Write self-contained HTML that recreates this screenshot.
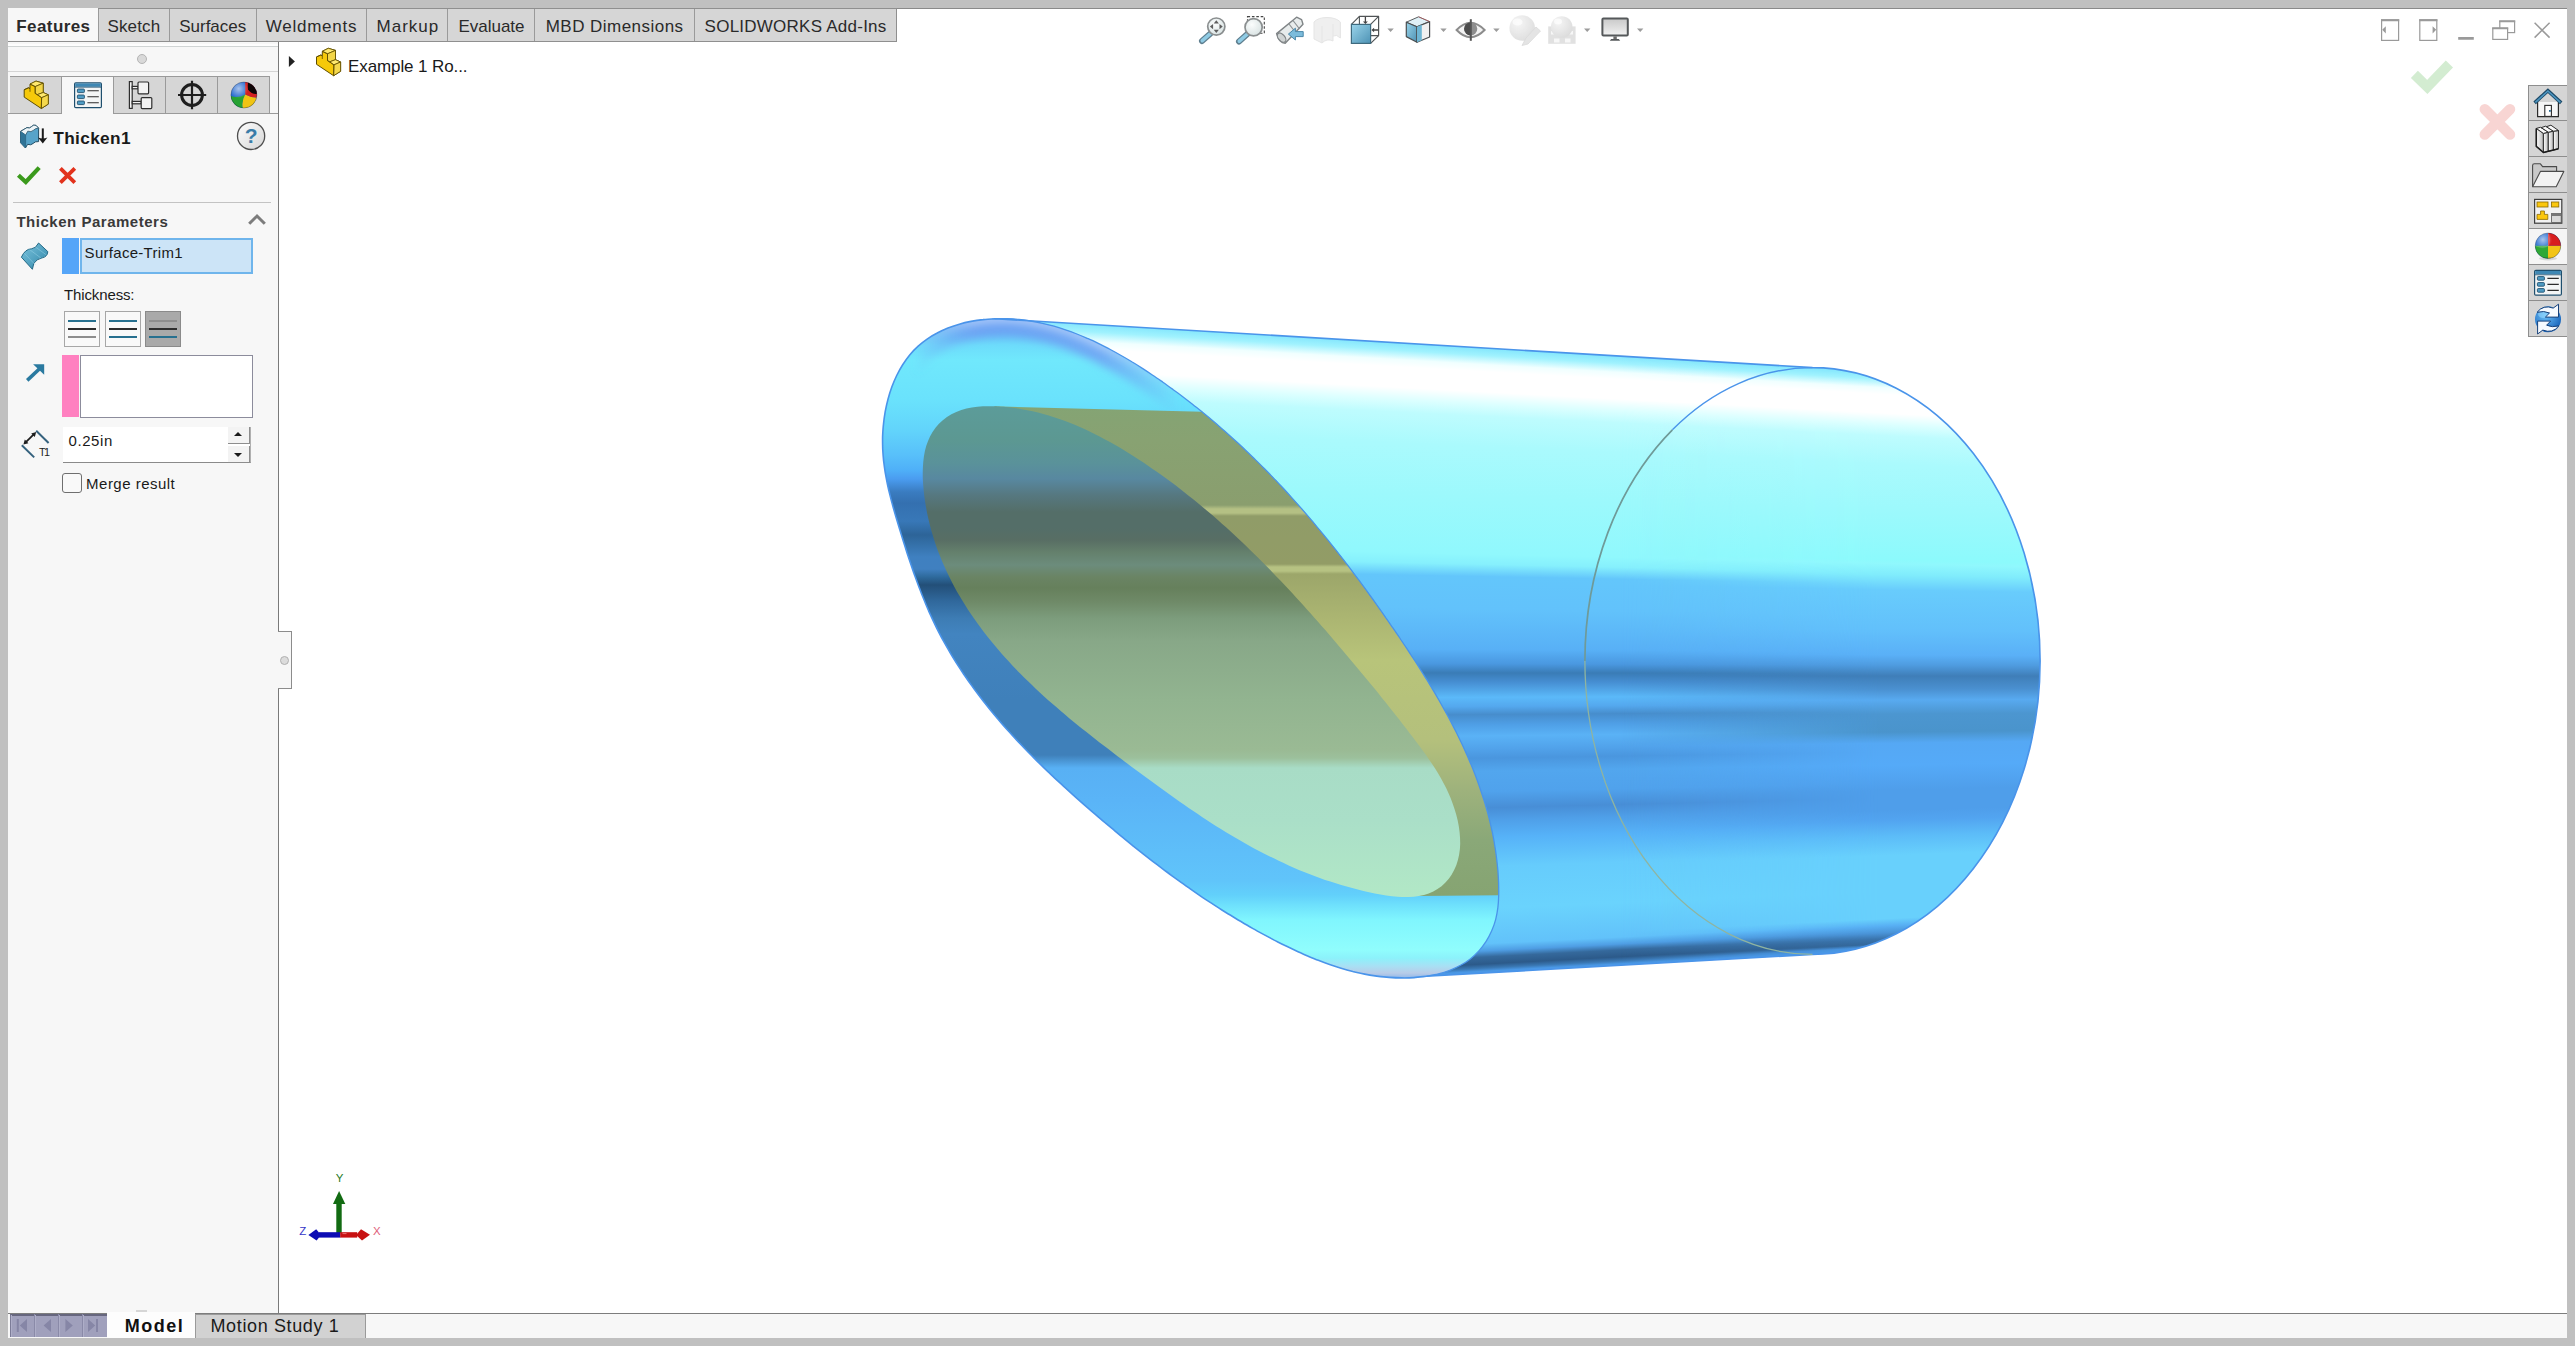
<!DOCTYPE html>
<html lang="en">
<head>
<meta charset="utf-8">
<title>Thicken1 - Example 1 Ro...</title>
<style>
*{box-sizing:border-box;margin:0;padding:0}
html,body{width:2575px;height:1346px;overflow:hidden;background:#c0c0c0;font-family:"Liberation Sans",sans-serif;color:#1b1b1b}
.abs{position:absolute}
.t{position:absolute;white-space:pre;line-height:1;color:#1e1e1e}
#vp{position:absolute;left:279px;top:8px;width:2288px;height:1305px;background:#fff}
#lp{position:absolute;left:8px;top:42px;width:270px;height:1271px;background:#f7f7f7}
#lpb{position:absolute;left:278px;top:42px;width:1px;height:1271px;background:#7a7a7a}
#tabs{position:absolute;left:8px;top:8px;height:34px;width:889px;background:#d6d6d6;border-top:1px solid #8f8f8f;border-bottom:1px solid #8f8f8f;border-right:1px solid #8f8f8f}
#tabs .sep{position:absolute;top:0;width:1px;height:32px;background:#9a9a9a}
#tabs .act{position:absolute;left:0;top:-1px;width:90px;height:33px;background:#f7f7f7}
#bot{position:absolute;left:8px;top:1313px;width:2559px;height:25px;background:#f7f7f7;border-top:1px solid #7d7d7d}
</style>
</head>
<body>
<div id="vp"></div>
<div id="lp"></div>
<div class="abs" style="left:8px;top:8px;width:2559px;height:1px;background:#8a8a8a"></div>
<div id="lpb"></div>
<div id="tabs">
 <div class="act"></div>
 <div class="sep" style="left:90px"></div>
 <div class="sep" style="left:161px"></div>
 <div class="sep" style="left:248px"></div>
 <div class="sep" style="left:358px"></div>
 <div class="sep" style="left:439px"></div>
 <div class="sep" style="left:526px"></div>
 <div class="sep" style="left:686px"></div>
</div>
<!-- panel top strip -->
<div class="abs" style="left:8px;top:44px;width:270px;height:2px;background:#fdfdfd"></div>
<div class="abs" style="left:8px;top:46px;width:270px;height:1px;background:#d0d4d4"></div>
<div class="abs" style="left:8px;top:71px;width:270px;height:1px;background:#d4d4d4"></div>
<div class="abs" style="left:137px;top:54px;width:10px;height:10px;border-radius:50%;background:#d9d9d9;border:1px solid #b4b4b4"></div>
<!-- icon tabs -->
<div class="abs" style="left:10px;top:76px;width:260px;height:38px;background:#d6d6d6;border-top:1px solid #9a9a9a;border-right:1px solid #9a9a9a"></div>
<div class="abs" style="left:8px;top:113px;width:270px;height:1px;background:#9a9a9a"></div>
<div class="abs" style="left:62px;top:77px;width:51px;height:37px;background:#f7f7f7"></div>
<div class="abs" style="left:61px;top:77px;width:1px;height:36px;background:#9a9a9a"></div>
<div class="abs" style="left:113px;top:77px;width:1px;height:37px;background:#9a9a9a"></div>
<div class="abs" style="left:165px;top:77px;width:1px;height:36px;background:#9a9a9a"></div>
<div class="abs" style="left:217px;top:77px;width:1px;height:36px;background:#9a9a9a"></div>
<!-- separator under ok/cancel -->
<div class="abs" style="left:13px;top:202px;width:258px;height:1px;background:#c3c3c3"></div>
<!-- selection box 1 -->
<div class="abs" style="left:62px;top:238px;width:17px;height:36px;background:#55a5f8"></div>
<div class="abs" style="left:80px;top:238px;width:173px;height:36px;background:#cce4f7;border:2px solid #6fb5ec"></div>
<!-- thickness buttons -->
<div class="abs" style="left:64px;top:311px;width:36px;height:36px;background:#f9f9f9;border:1px solid #a7a7a7"></div>
<div class="abs" style="left:105px;top:311px;width:36px;height:36px;background:#f9f9f9;border:1px solid #a7a7a7"></div>
<div class="abs" style="left:145px;top:311px;width:36px;height:36px;background:#a9a9a9;border:1px solid #8a8a8a"></div>
<!-- lines in buttons -->
<div class="abs" style="left:68px;top:320px;width:28px;height:2px;background:#27708f"></div>
<div class="abs" style="left:68px;top:328px;width:28px;height:2px;background:#2d2d2d"></div>
<div class="abs" style="left:68px;top:336px;width:28px;height:2px;background:#8d8d8d"></div>
<div class="abs" style="left:109px;top:320px;width:28px;height:2px;background:#27708f"></div>
<div class="abs" style="left:109px;top:328px;width:28px;height:2px;background:#2d2d2d"></div>
<div class="abs" style="left:109px;top:336px;width:28px;height:2px;background:#27708f"></div>
<div class="abs" style="left:149px;top:320px;width:28px;height:2px;background:#8d8d8d"></div>
<div class="abs" style="left:149px;top:328px;width:28px;height:2px;background:#2d2d2d"></div>
<div class="abs" style="left:149px;top:336px;width:28px;height:2px;background:#27708f"></div>
<!-- selection box 2 -->
<div class="abs" style="left:62px;top:355px;width:17px;height:62px;background:#ff80c0"></div>
<div class="abs" style="left:80px;top:355px;width:173px;height:63px;background:#fff;border:1px solid #8c8c9c"></div>
<!-- spin box -->
<div class="abs" style="left:63px;top:427px;width:188px;height:36px;background:#fff;border-bottom:1px solid #8a8a8a;border-right:1px solid #b0b0b0"></div>
<div class="abs" style="left:228px;top:427px;width:22px;height:17px;background:#f3f3f3;border-right:1px solid #8d8d8d;border-bottom:1px solid #8d8d8d"></div>
<div class="abs" style="left:228px;top:446px;width:22px;height:17px;background:#f3f3f3;border-right:1px solid #8d8d8d;border-bottom:1px solid #8d8d8d"></div>
<div class="abs" style="left:234px;top:432px;width:0;height:0;border-left:4px solid transparent;border-right:4px solid transparent;border-bottom:4px solid #1a1a1a"></div>
<div class="abs" style="left:234px;top:453px;width:0;height:0;border-left:4px solid transparent;border-right:4px solid transparent;border-top:4px solid #1a1a1a"></div>
<!-- checkbox -->
<div class="abs" style="left:62px;top:473px;width:20px;height:20px;background:#f9f9f9;border:1px solid #6f6f6f;border-radius:3px"></div>
<!-- splitter handle -->
<div class="abs" style="left:278px;top:631px;width:14px;height:58px;background:#f7f7f7;border:1px solid #8c8c8c;border-left:none"></div>
<div class="abs" style="left:280px;top:656px;width:9px;height:9px;border-radius:50%;background:#dcdcdc;border:1px solid #b0b0b0"></div>
<!-- grip --><div class="abs" style="left:136px;top:1310px;width:11px;height:2px;background:#d6d6d6"></div>
<!-- bottom bar -->
<div id="bot"></div>
<div class="abs" style="left:10px;top:1314px;width:97px;height:23px;background:#a0a0bc;border-top:2px solid #66667e;border-left:1px solid #7c7c98"></div>
<div class="abs" style="left:107px;top:1312px;width:88px;height:26px;background:#fdfdfd"></div>
<div class="abs" style="left:195px;top:1314px;width:171px;height:24px;background:#d2d2d2;border:1px solid #9a9a9a;border-bottom:none"></div>
<div class="abs" style="left:0;top:0;width:2575px;height:1346px;clip-path:path('M995.0 318.7 L1812.5 367.6 A227.6 293.4 0 0 1 1812.5 954.4 L1426.4 976.3 C1424.3 976.5 1418.2 977.3 1414.0 977.6 C1409.9 977.9 1405.7 978.0 1401.5 977.9 C1397.3 977.9 1393.2 977.7 1389.0 977.4 C1384.9 977.1 1380.8 976.6 1376.8 976.1 C1372.7 975.5 1368.7 974.9 1364.7 974.1 C1360.7 973.3 1356.8 972.4 1352.8 971.5 C1348.9 970.5 1345.0 969.4 1341.1 968.2 C1337.3 967.1 1333.4 965.8 1329.6 964.5 C1325.8 963.2 1322.0 961.8 1318.3 960.3 C1314.5 958.9 1310.8 957.3 1307.0 955.7 C1303.3 954.1 1299.6 952.5 1296.0 950.8 C1292.3 949.1 1288.7 947.3 1285.0 945.5 C1281.4 943.8 1277.8 941.9 1274.2 940.1 C1270.7 938.2 1267.1 936.3 1263.5 934.4 C1260.0 932.5 1256.5 930.6 1253.0 928.6 C1249.5 926.6 1246.0 924.6 1242.5 922.5 C1239.0 920.5 1235.6 918.4 1232.2 916.3 C1228.7 914.2 1225.3 912.1 1221.9 910.0 C1218.5 907.8 1215.1 905.6 1211.8 903.4 C1208.4 901.2 1205.0 899.0 1201.7 896.8 C1198.4 894.5 1195.0 892.2 1191.7 889.9 C1188.4 887.6 1185.1 885.3 1181.8 882.9 C1178.6 880.6 1175.3 878.2 1172.0 875.8 C1168.8 873.5 1165.6 871.0 1162.3 868.6 C1159.1 866.2 1155.9 863.7 1152.7 861.3 C1149.5 858.8 1146.3 856.3 1143.1 853.8 C1139.9 851.3 1136.8 848.8 1133.6 846.3 C1130.4 843.7 1127.3 841.2 1124.2 838.6 C1121.0 836.0 1117.9 833.4 1114.8 830.8 C1111.7 828.3 1108.5 825.6 1105.4 823.0 C1102.3 820.4 1099.2 817.8 1096.2 815.1 C1093.1 812.5 1090.0 809.8 1086.9 807.1 C1083.9 804.5 1080.8 801.8 1077.8 799.1 C1074.7 796.4 1071.7 793.7 1068.7 790.9 C1065.7 788.2 1062.7 785.5 1059.7 782.7 C1056.7 780.0 1053.7 777.2 1050.8 774.4 C1047.9 771.6 1044.9 768.8 1042.0 765.9 C1039.1 763.1 1036.2 760.3 1033.4 757.4 C1030.5 754.5 1027.7 751.6 1024.9 748.7 C1022.1 745.8 1019.3 742.9 1016.5 739.9 C1013.8 737.0 1011.1 734.0 1008.4 731.0 C1005.7 728.0 1003.0 725.0 1000.4 721.9 C997.8 718.9 995.2 715.8 992.6 712.7 C990.0 709.6 987.5 706.5 985.0 703.3 C982.5 700.2 980.1 697.0 977.7 693.8 C975.3 690.6 972.9 687.4 970.6 684.1 C968.2 680.8 966.0 677.5 963.7 674.2 C961.5 670.9 959.3 667.5 957.1 664.1 C955.0 660.8 952.9 657.3 950.8 653.9 C948.8 650.4 946.8 646.9 944.8 643.4 C942.8 639.9 940.9 636.4 939.1 632.8 C937.2 629.2 935.4 625.6 933.7 621.9 C932.0 618.2 930.3 614.5 928.6 610.8 C927.0 607.1 925.4 603.3 923.9 599.5 C922.3 595.8 920.8 592.0 919.4 588.1 C917.9 584.3 916.5 580.5 915.1 576.6 C913.7 572.8 912.4 568.9 911.1 565.0 C909.8 561.1 908.5 557.3 907.2 553.4 C906.0 549.5 904.7 545.6 903.5 541.7 C902.3 537.9 901.1 534.0 899.9 530.1 C898.7 526.3 897.6 522.4 896.4 518.6 C895.3 514.7 894.2 510.9 893.1 507.1 C892.1 503.2 891.0 499.4 890.1 495.6 C889.1 491.7 888.2 487.9 887.4 484.0 C886.6 480.2 885.9 476.3 885.2 472.4 C884.6 468.5 884.1 464.6 883.6 460.6 C883.2 456.7 882.9 452.7 882.7 448.7 C882.6 444.7 882.5 440.7 882.6 436.6 C882.8 432.5 883.0 428.3 883.5 424.2 C883.9 420.0 884.5 415.8 885.2 411.7 C886.0 407.5 886.9 403.3 888.0 399.2 C889.1 395.1 890.4 391.0 891.8 387.1 C893.3 383.1 894.9 379.2 896.7 375.5 C898.5 371.8 900.5 368.1 902.7 364.7 C904.8 361.3 907.2 358.0 909.7 354.9 C912.3 351.9 915.0 349.0 917.9 346.4 C920.8 343.7 923.9 341.3 927.1 339.1 C930.3 336.8 933.7 334.8 937.2 333.0 C940.6 331.1 944.3 329.5 947.9 328.0 C951.6 326.6 955.4 325.3 959.3 324.2 C963.1 323.1 967.0 322.2 971.0 321.4 C974.9 320.6 979.0 320.0 983.0 319.6 C987.0 319.1 993.0 318.8 995.0 318.7 Z');background:conic-gradient(from 0deg at 6880px 678px, #4a98e6 266.8583deg, #4a98e6 266.8906deg, #3a78b4 266.9228deg, #2c5a8a 266.9657deg, #35699c 267.0409deg, #4f9ee4 267.1054deg, #62c2fa 267.1806deg, #6ad3fd 267.5567deg, #66ccfc 267.9976deg, #56b2f8 268.3096deg, #4f9fe8 268.4926deg, #488ed6 268.6217deg, #50a2ec 268.7940deg, #52a6ee 269.0093deg, #4a96de 269.1492deg, #51a2ea 269.2462deg, #5ab2f6 269.3861deg, #4f9fe6 269.5046deg, #478dcc 269.6123deg, #54a8ee 269.6984deg, #5bb9f9 269.7954deg, #468ed2 269.9569deg, #3a7cb6 270.0538deg, #4a98e0 270.1508deg, #58b0f6 270.3016deg, #62c2fb 270.7323deg, #63c6fb 271.0769deg, #86f0fd 271.2060deg, #90f8fd 271.3137deg, #9cf9fc 271.9163deg, #aafafd 272.4540deg, #befcfe 272.7765deg, #dcffff 272.9054deg, #ffffff 273.0343deg, #ffffff 273.2490deg, #f0ffff 273.3242deg, #a0f2fe 273.4208deg, #7fe4fc 273.5120deg, #4f9ff0 273.5388deg)"></div>
<div class="abs" style="left:0;top:0;width:2575px;height:1346px;clip-path:path('M995.0 318.7 L1812.5 367.6 A227.6 293.4 0 0 1 1812.5 954.4 L1426.4 976.3 C1424.3 976.5 1418.2 977.3 1414.0 977.6 C1409.9 977.9 1405.7 978.0 1401.5 977.9 C1397.3 977.9 1393.2 977.7 1389.0 977.4 C1384.9 977.1 1380.8 976.6 1376.8 976.1 C1372.7 975.5 1368.7 974.9 1364.7 974.1 C1360.7 973.3 1356.8 972.4 1352.8 971.5 C1348.9 970.5 1345.0 969.4 1341.1 968.2 C1337.3 967.1 1333.4 965.8 1329.6 964.5 C1325.8 963.2 1322.0 961.8 1318.3 960.3 C1314.5 958.9 1310.8 957.3 1307.0 955.7 C1303.3 954.1 1299.6 952.5 1296.0 950.8 C1292.3 949.1 1288.7 947.3 1285.0 945.5 C1281.4 943.8 1277.8 941.9 1274.2 940.1 C1270.7 938.2 1267.1 936.3 1263.5 934.4 C1260.0 932.5 1256.5 930.6 1253.0 928.6 C1249.5 926.6 1246.0 924.6 1242.5 922.5 C1239.0 920.5 1235.6 918.4 1232.2 916.3 C1228.7 914.2 1225.3 912.1 1221.9 910.0 C1218.5 907.8 1215.1 905.6 1211.8 903.4 C1208.4 901.2 1205.0 899.0 1201.7 896.8 C1198.4 894.5 1195.0 892.2 1191.7 889.9 C1188.4 887.6 1185.1 885.3 1181.8 882.9 C1178.6 880.6 1175.3 878.2 1172.0 875.8 C1168.8 873.5 1165.6 871.0 1162.3 868.6 C1159.1 866.2 1155.9 863.7 1152.7 861.3 C1149.5 858.8 1146.3 856.3 1143.1 853.8 C1139.9 851.3 1136.8 848.8 1133.6 846.3 C1130.4 843.7 1127.3 841.2 1124.2 838.6 C1121.0 836.0 1117.9 833.4 1114.8 830.8 C1111.7 828.3 1108.5 825.6 1105.4 823.0 C1102.3 820.4 1099.2 817.8 1096.2 815.1 C1093.1 812.5 1090.0 809.8 1086.9 807.1 C1083.9 804.5 1080.8 801.8 1077.8 799.1 C1074.7 796.4 1071.7 793.7 1068.7 790.9 C1065.7 788.2 1062.7 785.5 1059.7 782.7 C1056.7 780.0 1053.7 777.2 1050.8 774.4 C1047.9 771.6 1044.9 768.8 1042.0 765.9 C1039.1 763.1 1036.2 760.3 1033.4 757.4 C1030.5 754.5 1027.7 751.6 1024.9 748.7 C1022.1 745.8 1019.3 742.9 1016.5 739.9 C1013.8 737.0 1011.1 734.0 1008.4 731.0 C1005.7 728.0 1003.0 725.0 1000.4 721.9 C997.8 718.9 995.2 715.8 992.6 712.7 C990.0 709.6 987.5 706.5 985.0 703.3 C982.5 700.2 980.1 697.0 977.7 693.8 C975.3 690.6 972.9 687.4 970.6 684.1 C968.2 680.8 966.0 677.5 963.7 674.2 C961.5 670.9 959.3 667.5 957.1 664.1 C955.0 660.8 952.9 657.3 950.8 653.9 C948.8 650.4 946.8 646.9 944.8 643.4 C942.8 639.9 940.9 636.4 939.1 632.8 C937.2 629.2 935.4 625.6 933.7 621.9 C932.0 618.2 930.3 614.5 928.6 610.8 C927.0 607.1 925.4 603.3 923.9 599.5 C922.3 595.8 920.8 592.0 919.4 588.1 C917.9 584.3 916.5 580.5 915.1 576.6 C913.7 572.8 912.4 568.9 911.1 565.0 C909.8 561.1 908.5 557.3 907.2 553.4 C906.0 549.5 904.7 545.6 903.5 541.7 C902.3 537.9 901.1 534.0 899.9 530.1 C898.7 526.3 897.6 522.4 896.4 518.6 C895.3 514.7 894.2 510.9 893.1 507.1 C892.1 503.2 891.0 499.4 890.1 495.6 C889.1 491.7 888.2 487.9 887.4 484.0 C886.6 480.2 885.9 476.3 885.2 472.4 C884.6 468.5 884.1 464.6 883.6 460.6 C883.2 456.7 882.9 452.7 882.7 448.7 C882.6 444.7 882.5 440.7 882.6 436.6 C882.8 432.5 883.0 428.3 883.5 424.2 C883.9 420.0 884.5 415.8 885.2 411.7 C886.0 407.5 886.9 403.3 888.0 399.2 C889.1 395.1 890.4 391.0 891.8 387.1 C893.3 383.1 894.9 379.2 896.7 375.5 C898.5 371.8 900.5 368.1 902.7 364.7 C904.8 361.3 907.2 358.0 909.7 354.9 C912.3 351.9 915.0 349.0 917.9 346.4 C920.8 343.7 923.9 341.3 927.1 339.1 C930.3 336.8 933.7 334.8 937.2 333.0 C940.6 331.1 944.3 329.5 947.9 328.0 C951.6 326.6 955.4 325.3 959.3 324.2 C963.1 323.1 967.0 322.2 971.0 321.4 C974.9 320.6 979.0 320.0 983.0 319.6 C987.0 319.1 993.0 318.8 995.0 318.7 Z');background:conic-gradient(from 0deg at 6880px 678px, #4a98e6 266.8737deg, #4a98e6 266.9196deg, #35699c 266.9540deg, #3a74ac 267.0114deg, #4a94d8 267.0802deg, #58b0f4 267.1605deg, #68d0fc 267.2409deg, #68d0fc 267.9644deg, #5cbcf8 268.1828deg, #52a4f0 268.3667deg, #4f9eea 268.4817deg, #4f9eea 268.7116deg, #55aaf8 268.9992deg, #55a8f4 269.2522deg, #4a94cc 269.3787deg, #4c96d0 269.5858deg, #58aaf0 269.7469deg, #4a90d0 269.8734deg, #3f7eb8 270.0230deg, #4f9ce0 270.1496deg, #5ab0f7 270.2646deg, #62c0fb 270.5522deg, #68ccfc 271.0124deg, #80ecfc 271.1849deg, #90f8fd 271.3137deg, #8cfafc 271.3574deg, #9cf9fc 271.9163deg, #aafafd 272.4540deg, #befcfe 272.7765deg, #dcffff 272.9054deg, #ffffff 273.0343deg, #ffffff 273.2490deg, #f0ffff 273.3242deg, #a0f2fe 273.4208deg, #7fe4fc 273.5120deg, #4f9ff0 273.5388deg);-webkit-mask-image:linear-gradient(to right,transparent 1620px,#000 1880px);mask-image:linear-gradient(to right,transparent 1620px,#000 1880px)"></div>
<svg class="abs" style="left:0;top:0" width="2575" height="1346" viewBox="0 0 2575 1346"><defs><linearGradient id="gR" gradientUnits="userSpaceOnUse" x1="0" y1="317" x2="0" y2="979"><stop offset="0.0000" stop-color="#5aa6f2"/><stop offset="0.0423" stop-color="#6ddcfb"/><stop offset="0.0650" stop-color="#70e8fc"/><stop offset="0.1254" stop-color="#6ae2fc"/><stop offset="0.1707" stop-color="#62d4fb"/><stop offset="0.2085" stop-color="#58c0fa"/><stop offset="0.2311" stop-color="#4fb0f8"/><stop offset="0.2447" stop-color="#4a9cf0"/><stop offset="0.2644" stop-color="#3a7cc0"/><stop offset="0.2810" stop-color="#3470b0"/><stop offset="0.3082" stop-color="#3878b8"/><stop offset="0.3293" stop-color="#2d6498"/><stop offset="0.3429" stop-color="#3470a8"/><stop offset="0.3625" stop-color="#3f80c0"/><stop offset="0.3807" stop-color="#4080c0"/><stop offset="0.3927" stop-color="#2e6a9c"/><stop offset="0.4048" stop-color="#234f78"/><stop offset="0.4290" stop-color="#30689c"/><stop offset="0.4547" stop-color="#3d7cb4"/><stop offset="0.4789" stop-color="#4284c0"/><stop offset="0.5785" stop-color="#3f80ba"/><stop offset="0.6616" stop-color="#3f80ba"/><stop offset="0.6813" stop-color="#58b0f4"/><stop offset="0.7296" stop-color="#5ab4f7"/><stop offset="0.8505" stop-color="#60c4fa"/><stop offset="0.8731" stop-color="#62d0fb"/><stop offset="0.8882" stop-color="#6ee0fc"/><stop offset="0.9109" stop-color="#80f6fe"/><stop offset="0.9562" stop-color="#90fdfd"/><stop offset="0.9683" stop-color="#8cf2fb"/><stop offset="0.9804" stop-color="#a8e0f4"/><stop offset="0.9909" stop-color="#b8cce8"/><stop offset="0.9970" stop-color="#9abce8"/><stop offset="1.0000" stop-color="#4f9ff0"/></linearGradient><linearGradient id="gI" gradientUnits="userSpaceOnUse" x1="0" y1="404" x2="0" y2="897"><stop offset="0.0000" stop-color="#5c9c9a"/><stop offset="0.0730" stop-color="#5c9892"/><stop offset="0.1197" stop-color="#5a929a"/><stop offset="0.1521" stop-color="#5888a0"/><stop offset="0.1846" stop-color="#567880"/><stop offset="0.2191" stop-color="#546e68"/><stop offset="0.2515" stop-color="#546e68"/><stop offset="0.2759" stop-color="#586e64"/><stop offset="0.3002" stop-color="#64806c"/><stop offset="0.3266" stop-color="#6c8c7c"/><stop offset="0.3509" stop-color="#6a8464"/><stop offset="0.3732" stop-color="#66805c"/><stop offset="0.4016" stop-color="#6f8a68"/><stop offset="0.4341" stop-color="#7c9c7c"/><stop offset="0.4828" stop-color="#88a888"/><stop offset="0.6004" stop-color="#92b490"/><stop offset="0.7018" stop-color="#9aba94"/><stop offset="0.7181" stop-color="#9cc09c"/><stop offset="0.7383" stop-color="#a8dcc6"/><stop offset="0.8438" stop-color="#aadfc8"/><stop offset="1.0000" stop-color="#b2e8c6"/></linearGradient><linearGradient id="gO" gradientUnits="userSpaceOnUse" x1="0" y1="404" x2="0" y2="895"><stop offset="0.0000" stop-color="#84a474"/><stop offset="0.0733" stop-color="#88a272"/><stop offset="0.2057" stop-color="#8a9e6e"/><stop offset="0.2138" stop-color="#b4c084"/><stop offset="0.2220" stop-color="#b4c084"/><stop offset="0.2281" stop-color="#909c68"/><stop offset="0.3259" stop-color="#929c66"/><stop offset="0.3320" stop-color="#b6c282"/><stop offset="0.3401" stop-color="#b6c282"/><stop offset="0.3462" stop-color="#9ca66a"/><stop offset="0.4399" stop-color="#acb672"/><stop offset="0.5214" stop-color="#b8c47a"/><stop offset="0.6843" stop-color="#b4c07c"/><stop offset="0.7862" stop-color="#9eb27c"/><stop offset="0.8880" stop-color="#8aa878"/><stop offset="1.0000" stop-color="#86a472"/></linearGradient></defs><path d="M995.0 318.7 C993.0 318.8 987.0 319.1 983.0 319.6 C979.0 320.0 974.9 320.6 971.0 321.4 C967.0 322.2 963.1 323.1 959.3 324.2 C955.4 325.3 951.6 326.6 947.9 328.0 C944.3 329.5 940.6 331.1 937.2 333.0 C933.7 334.8 930.3 336.8 927.1 339.1 C923.9 341.3 920.8 343.7 917.9 346.4 C915.0 349.0 912.3 351.9 909.7 354.9 C907.2 358.0 904.8 361.3 902.7 364.7 C900.5 368.1 898.5 371.8 896.7 375.5 C894.9 379.2 893.3 383.1 891.8 387.1 C890.4 391.0 889.1 395.1 888.0 399.2 C886.9 403.3 886.0 407.5 885.2 411.7 C884.5 415.8 883.9 420.0 883.5 424.2 C883.0 428.3 882.8 432.5 882.6 436.6 C882.5 440.7 882.6 444.7 882.7 448.7 C882.9 452.7 883.2 456.7 883.6 460.6 C884.1 464.6 884.6 468.5 885.2 472.4 C885.9 476.3 886.6 480.2 887.4 484.0 C888.2 487.9 889.1 491.7 890.1 495.6 C891.0 499.4 892.1 503.2 893.1 507.1 C894.2 510.9 895.3 514.7 896.4 518.6 C897.6 522.4 898.7 526.3 899.9 530.1 C901.1 534.0 902.3 537.9 903.5 541.7 C904.7 545.6 906.0 549.5 907.2 553.4 C908.5 557.3 909.8 561.1 911.1 565.0 C912.4 568.9 913.7 572.8 915.1 576.6 C916.5 580.5 917.9 584.3 919.4 588.1 C920.8 592.0 922.3 595.8 923.9 599.5 C925.4 603.3 927.0 607.1 928.6 610.8 C930.3 614.5 932.0 618.2 933.7 621.9 C935.4 625.6 937.2 629.2 939.1 632.8 C940.9 636.4 942.8 639.9 944.8 643.4 C946.8 646.9 948.8 650.4 950.8 653.9 C952.9 657.3 955.0 660.8 957.1 664.1 C959.3 667.5 961.5 670.9 963.7 674.2 C966.0 677.5 968.2 680.8 970.6 684.1 C972.9 687.4 975.3 690.6 977.7 693.8 C980.1 697.0 982.5 700.2 985.0 703.3 C987.5 706.5 990.0 709.6 992.6 712.7 C995.2 715.8 997.8 718.9 1000.4 721.9 C1003.0 725.0 1005.7 728.0 1008.4 731.0 C1011.1 734.0 1013.8 737.0 1016.5 739.9 C1019.3 742.9 1022.1 745.8 1024.9 748.7 C1027.7 751.6 1030.5 754.5 1033.4 757.4 C1036.2 760.3 1039.1 763.1 1042.0 765.9 C1044.9 768.8 1047.9 771.6 1050.8 774.4 C1053.7 777.2 1056.7 780.0 1059.7 782.7 C1062.7 785.5 1065.7 788.2 1068.7 790.9 C1071.7 793.7 1074.7 796.4 1077.8 799.1 C1080.8 801.8 1083.9 804.5 1086.9 807.1 C1090.0 809.8 1093.1 812.5 1096.2 815.1 C1099.2 817.8 1102.3 820.4 1105.4 823.0 C1108.5 825.6 1111.7 828.3 1114.8 830.8 C1117.9 833.4 1121.0 836.0 1124.2 838.6 C1127.3 841.2 1130.4 843.7 1133.6 846.3 C1136.8 848.8 1139.9 851.3 1143.1 853.8 C1146.3 856.3 1149.5 858.8 1152.7 861.3 C1155.9 863.7 1159.1 866.2 1162.3 868.6 C1165.6 871.0 1168.8 873.5 1172.0 875.8 C1175.3 878.2 1178.6 880.6 1181.8 882.9 C1185.1 885.3 1188.4 887.6 1191.7 889.9 C1195.0 892.2 1198.4 894.5 1201.7 896.8 C1205.0 899.0 1208.4 901.2 1211.8 903.4 C1215.1 905.6 1218.5 907.8 1221.9 910.0 C1225.3 912.1 1228.7 914.2 1232.2 916.3 C1235.6 918.4 1239.0 920.5 1242.5 922.5 C1246.0 924.6 1249.5 926.6 1253.0 928.6 C1256.5 930.6 1260.0 932.5 1263.5 934.4 C1267.1 936.3 1270.7 938.2 1274.2 940.1 C1277.8 941.9 1281.4 943.8 1285.0 945.5 C1288.7 947.3 1292.3 949.1 1296.0 950.8 C1299.6 952.5 1303.3 954.1 1307.0 955.7 C1310.8 957.3 1314.5 958.9 1318.3 960.3 C1322.0 961.8 1325.8 963.2 1329.6 964.5 C1333.4 965.8 1337.3 967.1 1341.1 968.2 C1345.0 969.4 1348.9 970.5 1352.8 971.5 C1356.8 972.4 1360.7 973.3 1364.7 974.1 C1368.7 974.9 1372.7 975.5 1376.8 976.1 C1380.8 976.6 1384.9 977.1 1389.0 977.4 C1393.2 977.7 1397.3 977.9 1401.5 977.9 C1405.7 978.0 1409.9 977.9 1414.0 977.6 C1418.2 977.3 1422.3 976.9 1426.4 976.3 C1430.4 975.7 1434.5 974.9 1438.4 973.9 C1442.3 972.9 1446.1 971.7 1449.8 970.3 C1453.5 968.9 1457.1 967.2 1460.5 965.3 C1463.9 963.5 1467.2 961.3 1470.3 958.9 C1473.3 956.5 1476.2 953.8 1478.9 950.9 C1481.5 948.0 1483.9 944.8 1486.1 941.4 C1488.2 938.1 1490.1 934.5 1491.7 930.8 C1493.3 927.1 1494.7 923.2 1495.7 919.3 C1496.7 915.4 1497.4 911.4 1497.9 907.4 C1498.4 903.4 1498.6 899.3 1498.7 895.2 C1498.8 891.1 1498.7 886.9 1498.6 882.8 C1498.4 878.7 1498.2 874.6 1497.9 870.6 C1497.5 866.5 1497.1 862.5 1496.6 858.5 C1496.1 854.4 1495.6 850.4 1494.9 846.5 C1494.3 842.5 1493.6 838.5 1492.8 834.6 C1492.0 830.6 1491.1 826.7 1490.2 822.8 C1489.3 818.9 1488.3 815.0 1487.2 811.1 C1486.1 807.3 1485.0 803.4 1483.8 799.6 C1482.6 795.8 1481.3 792.0 1480.0 788.2 C1478.7 784.4 1477.3 780.6 1475.9 776.8 C1474.5 773.1 1473.0 769.3 1471.5 765.6 C1469.9 761.9 1468.4 758.2 1466.7 754.5 C1465.1 750.8 1463.4 747.1 1461.7 743.5 C1459.9 739.8 1458.2 736.2 1456.4 732.5 C1454.5 728.9 1452.7 725.3 1450.8 721.7 C1448.9 718.1 1447.0 714.5 1445.0 711.0 C1443.0 707.4 1441.0 703.8 1439.0 700.3 C1437.0 696.8 1434.9 693.2 1432.8 689.7 C1430.7 686.2 1428.6 682.7 1426.5 679.2 C1424.3 675.7 1422.1 672.3 1420.0 668.8 C1417.8 665.4 1415.6 661.9 1413.3 658.5 C1411.1 655.1 1408.8 651.6 1406.6 648.2 C1404.3 644.8 1402.0 641.4 1399.8 638.0 C1397.5 634.7 1395.2 631.3 1392.9 627.9 C1390.6 624.6 1388.3 621.2 1385.9 617.9 C1383.6 614.5 1381.3 611.2 1378.9 607.9 C1376.6 604.6 1374.2 601.3 1371.9 598.0 C1369.5 594.7 1367.1 591.4 1364.8 588.2 C1362.4 584.9 1360.0 581.6 1357.6 578.4 C1355.2 575.2 1352.7 571.9 1350.3 568.7 C1347.9 565.5 1345.4 562.3 1343.0 559.1 C1340.5 556.0 1338.0 552.8 1335.6 549.6 C1333.1 546.5 1330.6 543.4 1328.0 540.2 C1325.5 537.1 1323.0 534.0 1320.4 530.9 C1317.9 527.8 1315.3 524.8 1312.8 521.7 C1310.2 518.6 1307.6 515.6 1305.0 512.6 C1302.3 509.6 1299.7 506.5 1297.1 503.6 C1294.4 500.6 1291.7 497.6 1289.1 494.6 C1286.4 491.7 1283.7 488.7 1280.9 485.8 C1278.2 482.9 1275.5 480.0 1272.7 477.1 C1269.9 474.2 1267.1 471.4 1264.3 468.5 C1261.5 465.7 1258.7 462.9 1255.8 460.1 C1253.0 457.3 1250.1 454.5 1247.2 451.7 C1244.3 448.9 1241.4 446.2 1238.5 443.5 C1235.5 440.7 1232.5 438.0 1229.6 435.4 C1226.6 432.7 1223.6 430.0 1220.5 427.4 C1217.5 424.7 1214.4 422.1 1211.3 419.5 C1208.2 416.9 1205.1 414.3 1202.0 411.8 C1198.8 409.2 1195.6 406.7 1192.5 404.2 C1189.3 401.7 1186.0 399.2 1182.8 396.7 C1179.5 394.3 1176.2 391.8 1172.9 389.4 C1169.6 387.0 1166.3 384.6 1162.9 382.2 C1159.6 379.9 1156.2 377.5 1152.7 375.2 C1149.3 372.9 1145.8 370.6 1142.4 368.4 C1138.9 366.1 1135.4 363.9 1131.8 361.8 C1128.3 359.6 1124.7 357.5 1121.1 355.5 C1117.5 353.4 1113.9 351.4 1110.3 349.5 C1106.7 347.5 1103.0 345.7 1099.3 343.9 C1095.6 342.1 1091.9 340.3 1088.2 338.7 C1084.4 337.1 1080.7 335.5 1076.9 334.0 C1073.1 332.5 1069.4 331.1 1065.5 329.8 C1061.7 328.5 1057.9 327.3 1054.0 326.2 C1050.2 325.2 1046.3 324.2 1042.4 323.3 C1038.5 322.4 1034.6 321.6 1030.7 321.0 C1026.8 320.4 1022.8 319.8 1018.9 319.4 C1014.9 319.0 1011.0 318.8 1007.0 318.6 C1003.0 318.5 997.0 318.7 995.0 318.7 Z" fill="url(#gR)"/><clipPath id="cpC"><path d="M995.0 318.7 C993.0 318.8 987.0 319.1 983.0 319.6 C979.0 320.0 974.9 320.6 971.0 321.4 C967.0 322.2 963.1 323.1 959.3 324.2 C955.4 325.3 951.6 326.6 947.9 328.0 C944.3 329.5 940.6 331.1 937.2 333.0 C933.7 334.8 930.3 336.8 927.1 339.1 C923.9 341.3 920.8 343.7 917.9 346.4 C915.0 349.0 912.3 351.9 909.7 354.9 C907.2 358.0 904.8 361.3 902.7 364.7 C900.5 368.1 898.5 371.8 896.7 375.5 C894.9 379.2 893.3 383.1 891.8 387.1 C890.4 391.0 889.1 395.1 888.0 399.2 C886.9 403.3 886.0 407.5 885.2 411.7 C884.5 415.8 883.9 420.0 883.5 424.2 C883.0 428.3 882.8 432.5 882.6 436.6 C882.5 440.7 882.6 444.7 882.7 448.7 C882.9 452.7 883.2 456.7 883.6 460.6 C884.1 464.6 884.6 468.5 885.2 472.4 C885.9 476.3 886.6 480.2 887.4 484.0 C888.2 487.9 889.1 491.7 890.1 495.6 C891.0 499.4 892.1 503.2 893.1 507.1 C894.2 510.9 895.3 514.7 896.4 518.6 C897.6 522.4 898.7 526.3 899.9 530.1 C901.1 534.0 902.3 537.9 903.5 541.7 C904.7 545.6 906.0 549.5 907.2 553.4 C908.5 557.3 909.8 561.1 911.1 565.0 C912.4 568.9 913.7 572.8 915.1 576.6 C916.5 580.5 917.9 584.3 919.4 588.1 C920.8 592.0 922.3 595.8 923.9 599.5 C925.4 603.3 927.0 607.1 928.6 610.8 C930.3 614.5 932.0 618.2 933.7 621.9 C935.4 625.6 937.2 629.2 939.1 632.8 C940.9 636.4 942.8 639.9 944.8 643.4 C946.8 646.9 948.8 650.4 950.8 653.9 C952.9 657.3 955.0 660.8 957.1 664.1 C959.3 667.5 961.5 670.9 963.7 674.2 C966.0 677.5 968.2 680.8 970.6 684.1 C972.9 687.4 975.3 690.6 977.7 693.8 C980.1 697.0 982.5 700.2 985.0 703.3 C987.5 706.5 990.0 709.6 992.6 712.7 C995.2 715.8 997.8 718.9 1000.4 721.9 C1003.0 725.0 1005.7 728.0 1008.4 731.0 C1011.1 734.0 1013.8 737.0 1016.5 739.9 C1019.3 742.9 1022.1 745.8 1024.9 748.7 C1027.7 751.6 1030.5 754.5 1033.4 757.4 C1036.2 760.3 1039.1 763.1 1042.0 765.9 C1044.9 768.8 1047.9 771.6 1050.8 774.4 C1053.7 777.2 1056.7 780.0 1059.7 782.7 C1062.7 785.5 1065.7 788.2 1068.7 790.9 C1071.7 793.7 1074.7 796.4 1077.8 799.1 C1080.8 801.8 1083.9 804.5 1086.9 807.1 C1090.0 809.8 1093.1 812.5 1096.2 815.1 C1099.2 817.8 1102.3 820.4 1105.4 823.0 C1108.5 825.6 1111.7 828.3 1114.8 830.8 C1117.9 833.4 1121.0 836.0 1124.2 838.6 C1127.3 841.2 1130.4 843.7 1133.6 846.3 C1136.8 848.8 1139.9 851.3 1143.1 853.8 C1146.3 856.3 1149.5 858.8 1152.7 861.3 C1155.9 863.7 1159.1 866.2 1162.3 868.6 C1165.6 871.0 1168.8 873.5 1172.0 875.8 C1175.3 878.2 1178.6 880.6 1181.8 882.9 C1185.1 885.3 1188.4 887.6 1191.7 889.9 C1195.0 892.2 1198.4 894.5 1201.7 896.8 C1205.0 899.0 1208.4 901.2 1211.8 903.4 C1215.1 905.6 1218.5 907.8 1221.9 910.0 C1225.3 912.1 1228.7 914.2 1232.2 916.3 C1235.6 918.4 1239.0 920.5 1242.5 922.5 C1246.0 924.6 1249.5 926.6 1253.0 928.6 C1256.5 930.6 1260.0 932.5 1263.5 934.4 C1267.1 936.3 1270.7 938.2 1274.2 940.1 C1277.8 941.9 1281.4 943.8 1285.0 945.5 C1288.7 947.3 1292.3 949.1 1296.0 950.8 C1299.6 952.5 1303.3 954.1 1307.0 955.7 C1310.8 957.3 1314.5 958.9 1318.3 960.3 C1322.0 961.8 1325.8 963.2 1329.6 964.5 C1333.4 965.8 1337.3 967.1 1341.1 968.2 C1345.0 969.4 1348.9 970.5 1352.8 971.5 C1356.8 972.4 1360.7 973.3 1364.7 974.1 C1368.7 974.9 1372.7 975.5 1376.8 976.1 C1380.8 976.6 1384.9 977.1 1389.0 977.4 C1393.2 977.7 1397.3 977.9 1401.5 977.9 C1405.7 978.0 1409.9 977.9 1414.0 977.6 C1418.2 977.3 1422.3 976.9 1426.4 976.3 C1430.4 975.7 1434.5 974.9 1438.4 973.9 C1442.3 972.9 1446.1 971.7 1449.8 970.3 C1453.5 968.9 1457.1 967.2 1460.5 965.3 C1463.9 963.5 1467.2 961.3 1470.3 958.9 C1473.3 956.5 1476.2 953.8 1478.9 950.9 C1481.5 948.0 1483.9 944.8 1486.1 941.4 C1488.2 938.1 1490.1 934.5 1491.7 930.8 C1493.3 927.1 1494.7 923.2 1495.7 919.3 C1496.7 915.4 1497.4 911.4 1497.9 907.4 C1498.4 903.4 1498.6 899.3 1498.7 895.2 C1498.8 891.1 1498.7 886.9 1498.6 882.8 C1498.4 878.7 1498.2 874.6 1497.9 870.6 C1497.5 866.5 1497.1 862.5 1496.6 858.5 C1496.1 854.4 1495.6 850.4 1494.9 846.5 C1494.3 842.5 1493.6 838.5 1492.8 834.6 C1492.0 830.6 1491.1 826.7 1490.2 822.8 C1489.3 818.9 1488.3 815.0 1487.2 811.1 C1486.1 807.3 1485.0 803.4 1483.8 799.6 C1482.6 795.8 1481.3 792.0 1480.0 788.2 C1478.7 784.4 1477.3 780.6 1475.9 776.8 C1474.5 773.1 1473.0 769.3 1471.5 765.6 C1469.9 761.9 1468.4 758.2 1466.7 754.5 C1465.1 750.8 1463.4 747.1 1461.7 743.5 C1459.9 739.8 1458.2 736.2 1456.4 732.5 C1454.5 728.9 1452.7 725.3 1450.8 721.7 C1448.9 718.1 1447.0 714.5 1445.0 711.0 C1443.0 707.4 1441.0 703.8 1439.0 700.3 C1437.0 696.8 1434.9 693.2 1432.8 689.7 C1430.7 686.2 1428.6 682.7 1426.5 679.2 C1424.3 675.7 1422.1 672.3 1420.0 668.8 C1417.8 665.4 1415.6 661.9 1413.3 658.5 C1411.1 655.1 1408.8 651.6 1406.6 648.2 C1404.3 644.8 1402.0 641.4 1399.8 638.0 C1397.5 634.7 1395.2 631.3 1392.9 627.9 C1390.6 624.6 1388.3 621.2 1385.9 617.9 C1383.6 614.5 1381.3 611.2 1378.9 607.9 C1376.6 604.6 1374.2 601.3 1371.9 598.0 C1369.5 594.7 1367.1 591.4 1364.8 588.2 C1362.4 584.9 1360.0 581.6 1357.6 578.4 C1355.2 575.2 1352.7 571.9 1350.3 568.7 C1347.9 565.5 1345.4 562.3 1343.0 559.1 C1340.5 556.0 1338.0 552.8 1335.6 549.6 C1333.1 546.5 1330.6 543.4 1328.0 540.2 C1325.5 537.1 1323.0 534.0 1320.4 530.9 C1317.9 527.8 1315.3 524.8 1312.8 521.7 C1310.2 518.6 1307.6 515.6 1305.0 512.6 C1302.3 509.6 1299.7 506.5 1297.1 503.6 C1294.4 500.6 1291.7 497.6 1289.1 494.6 C1286.4 491.7 1283.7 488.7 1280.9 485.8 C1278.2 482.9 1275.5 480.0 1272.7 477.1 C1269.9 474.2 1267.1 471.4 1264.3 468.5 C1261.5 465.7 1258.7 462.9 1255.8 460.1 C1253.0 457.3 1250.1 454.5 1247.2 451.7 C1244.3 448.9 1241.4 446.2 1238.5 443.5 C1235.5 440.7 1232.5 438.0 1229.6 435.4 C1226.6 432.7 1223.6 430.0 1220.5 427.4 C1217.5 424.7 1214.4 422.1 1211.3 419.5 C1208.2 416.9 1205.1 414.3 1202.0 411.8 C1198.8 409.2 1195.6 406.7 1192.5 404.2 C1189.3 401.7 1186.0 399.2 1182.8 396.7 C1179.5 394.3 1176.2 391.8 1172.9 389.4 C1169.6 387.0 1166.3 384.6 1162.9 382.2 C1159.6 379.9 1156.2 377.5 1152.7 375.2 C1149.3 372.9 1145.8 370.6 1142.4 368.4 C1138.9 366.1 1135.4 363.9 1131.8 361.8 C1128.3 359.6 1124.7 357.5 1121.1 355.5 C1117.5 353.4 1113.9 351.4 1110.3 349.5 C1106.7 347.5 1103.0 345.7 1099.3 343.9 C1095.6 342.1 1091.9 340.3 1088.2 338.7 C1084.4 337.1 1080.7 335.5 1076.9 334.0 C1073.1 332.5 1069.4 331.1 1065.5 329.8 C1061.7 328.5 1057.9 327.3 1054.0 326.2 C1050.2 325.2 1046.3 324.2 1042.4 323.3 C1038.5 322.4 1034.6 321.6 1030.7 321.0 C1026.8 320.4 1022.8 319.8 1018.9 319.4 C1014.9 319.0 1011.0 318.8 1007.0 318.6 C1003.0 318.5 997.0 318.7 995.0 318.7 Z"/></clipPath><filter id="bl" x="-10%" y="-50%" width="120%" height="200%"><feGaussianBlur stdDeviation="4.5"/></filter><linearGradient id="gV" gradientUnits="userSpaceOnUse" x1="915" y1="0" x2="1180" y2="0"><stop offset="0" stop-color="#6f9ff3" stop-opacity="0"/><stop offset=".22" stop-color="#6f9ff3" stop-opacity=".85"/><stop offset=".7" stop-color="#6f9ff3" stop-opacity=".85"/><stop offset="1" stop-color="#6f9ff3" stop-opacity="0"/></linearGradient><linearGradient id="gW" gradientUnits="userSpaceOnUse" x1="915" y1="0" x2="1180" y2="0"><stop offset="0" stop-color="#eef5ff" stop-opacity="0"/><stop offset=".22" stop-color="#eef5ff" stop-opacity=".6"/><stop offset=".7" stop-color="#eef5ff" stop-opacity=".6"/><stop offset="1" stop-color="#eef5ff" stop-opacity="0"/></linearGradient><g clip-path="url(#cpC)"><path d="M888.0 399.2 C888.7 397.2 890.4 391.0 891.8 387.1 C893.3 383.1 894.9 379.2 896.7 375.5 C898.5 371.8 900.5 368.1 902.7 364.7 C904.8 361.3 907.2 358.0 909.7 354.9 C912.3 351.9 915.0 349.0 917.9 346.4 C920.8 343.7 923.9 341.3 927.1 339.1 C930.3 336.8 933.7 334.8 937.2 333.0 C940.6 331.1 944.3 329.5 947.9 328.0 C951.6 326.6 955.4 325.3 959.3 324.2 C963.1 323.1 967.0 322.2 971.0 321.4 C974.9 320.6 979.0 320.0 983.0 319.6 C987.0 319.1 991.0 318.8 995.0 318.7 C999.0 318.5 1003.0 318.5 1007.0 318.6 C1011.0 318.8 1014.9 319.0 1018.9 319.4 C1022.8 319.8 1026.8 320.4 1030.7 321.0 C1034.6 321.6 1038.5 322.4 1042.4 323.3 C1046.3 324.2 1050.2 325.2 1054.0 326.2 C1057.9 327.3 1061.7 328.5 1065.5 329.8 C1069.4 331.1 1073.1 332.5 1076.9 334.0 C1080.7 335.5 1084.4 337.1 1088.2 338.7 C1091.9 340.3 1095.6 342.1 1099.3 343.9 C1103.0 345.7 1106.7 347.5 1110.3 349.5 C1113.9 351.4 1117.5 353.4 1121.1 355.5 C1124.7 357.5 1128.3 359.6 1131.8 361.8 C1135.4 363.9 1138.9 366.1 1142.4 368.4 C1145.8 370.6 1149.3 372.9 1152.7 375.2 C1156.2 377.5 1159.6 379.9 1162.9 382.2 C1166.3 384.6 1169.6 387.0 1172.9 389.4 C1176.2 391.8 1179.5 394.3 1182.8 396.7 C1186.0 399.2 1189.3 401.7 1192.5 404.2 C1195.6 406.7 1198.8 409.2 1202.0 411.8 C1205.1 414.3 1208.2 416.9 1211.3 419.5 C1214.4 422.1 1217.5 424.7 1220.5 427.4 C1223.6 430.0 1226.6 432.7 1229.6 435.4 C1232.5 438.0 1237.0 442.1 1238.5 443.5" fill="none" stroke="url(#gV)" stroke-width="36" filter="url(#bl)"/><path d="M888.0 399.2 C888.7 397.2 890.4 391.0 891.8 387.1 C893.3 383.1 894.9 379.2 896.7 375.5 C898.5 371.8 900.5 368.1 902.7 364.7 C904.8 361.3 907.2 358.0 909.7 354.9 C912.3 351.9 915.0 349.0 917.9 346.4 C920.8 343.7 923.9 341.3 927.1 339.1 C930.3 336.8 933.7 334.8 937.2 333.0 C940.6 331.1 944.3 329.5 947.9 328.0 C951.6 326.6 955.4 325.3 959.3 324.2 C963.1 323.1 967.0 322.2 971.0 321.4 C974.9 320.6 979.0 320.0 983.0 319.6 C987.0 319.1 991.0 318.8 995.0 318.7 C999.0 318.5 1003.0 318.5 1007.0 318.6 C1011.0 318.8 1014.9 319.0 1018.9 319.4 C1022.8 319.8 1026.8 320.4 1030.7 321.0 C1034.6 321.6 1038.5 322.4 1042.4 323.3 C1046.3 324.2 1050.2 325.2 1054.0 326.2 C1057.9 327.3 1061.7 328.5 1065.5 329.8 C1069.4 331.1 1073.1 332.5 1076.9 334.0 C1080.7 335.5 1084.4 337.1 1088.2 338.7 C1091.9 340.3 1095.6 342.1 1099.3 343.9 C1103.0 345.7 1106.7 347.5 1110.3 349.5 C1113.9 351.4 1117.5 353.4 1121.1 355.5 C1124.7 357.5 1128.3 359.6 1131.8 361.8 C1135.4 363.9 1138.9 366.1 1142.4 368.4 C1145.8 370.6 1149.3 372.9 1152.7 375.2 C1156.2 377.5 1159.6 379.9 1162.9 382.2 C1166.3 384.6 1169.6 387.0 1172.9 389.4 C1176.2 391.8 1179.5 394.3 1182.8 396.7 C1186.0 399.2 1189.3 401.7 1192.5 404.2 C1195.6 406.7 1198.8 409.2 1202.0 411.8 C1205.1 414.3 1208.2 416.9 1211.3 419.5 C1214.4 422.1 1217.5 424.7 1220.5 427.4 C1223.6 430.0 1226.6 432.7 1229.6 435.4 C1232.5 438.0 1237.0 442.1 1238.5 443.5" fill="none" stroke="url(#gW)" stroke-width="7" filter="url(#bl)"/></g><path d="M994.1 406.3 L1202.0 411.8 C1203.5 413.1 1208.2 416.9 1211.3 419.5 C1214.4 422.1 1217.5 424.7 1220.5 427.4 C1223.6 430.0 1226.6 432.7 1229.6 435.4 C1232.5 438.0 1235.5 440.7 1238.5 443.5 C1241.4 446.2 1244.3 448.9 1247.2 451.7 C1250.1 454.5 1253.0 457.3 1255.8 460.1 C1258.7 462.9 1261.5 465.7 1264.3 468.5 C1267.1 471.4 1269.9 474.2 1272.7 477.1 C1275.5 480.0 1278.2 482.9 1280.9 485.8 C1283.7 488.7 1286.4 491.7 1289.1 494.6 C1291.7 497.6 1294.4 500.6 1297.1 503.6 C1299.7 506.5 1302.3 509.6 1305.0 512.6 C1307.6 515.6 1310.2 518.6 1312.8 521.7 C1315.3 524.8 1317.9 527.8 1320.4 530.9 C1323.0 534.0 1325.5 537.1 1328.0 540.2 C1330.6 543.4 1333.1 546.5 1335.6 549.6 C1338.0 552.8 1340.5 556.0 1343.0 559.1 C1345.4 562.3 1347.9 565.5 1350.3 568.7 C1352.7 571.9 1355.2 575.2 1357.6 578.4 C1360.0 581.6 1362.4 584.9 1364.8 588.2 C1367.1 591.4 1369.5 594.7 1371.9 598.0 C1374.2 601.3 1376.6 604.6 1378.9 607.9 C1381.3 611.2 1383.6 614.5 1385.9 617.9 C1388.3 621.2 1390.6 624.6 1392.9 627.9 C1395.2 631.3 1397.5 634.7 1399.8 638.0 C1402.0 641.4 1404.3 644.8 1406.6 648.2 C1408.8 651.6 1411.1 655.1 1413.3 658.5 C1415.6 661.9 1417.8 665.4 1420.0 668.8 C1422.1 672.3 1424.3 675.7 1426.5 679.2 C1428.6 682.7 1430.7 686.2 1432.8 689.7 C1434.9 693.2 1437.0 696.8 1439.0 700.3 C1441.0 703.8 1443.0 707.4 1445.0 711.0 C1447.0 714.5 1448.9 718.1 1450.8 721.7 C1452.7 725.3 1454.5 728.9 1456.4 732.5 C1458.2 736.2 1459.9 739.8 1461.7 743.5 C1463.4 747.1 1465.1 750.8 1466.7 754.5 C1468.4 758.2 1469.9 761.9 1471.5 765.6 C1473.0 769.3 1474.5 773.1 1475.9 776.8 C1477.3 780.6 1478.7 784.4 1480.0 788.2 C1481.3 792.0 1482.6 795.8 1483.8 799.6 C1485.0 803.4 1486.1 807.3 1487.2 811.1 C1488.3 815.0 1489.3 818.9 1490.2 822.8 C1491.1 826.7 1492.0 830.6 1492.8 834.6 C1493.6 838.5 1494.3 842.5 1494.9 846.5 C1495.6 850.4 1496.1 854.4 1496.6 858.5 C1497.1 862.5 1497.5 866.5 1497.9 870.6 C1498.2 874.6 1498.4 878.7 1498.6 882.8 C1498.7 886.9 1498.7 893.1 1498.7 895.2 L1419.0 896.0 Z" fill="url(#gO)"/><path d="M994.1 406.3 C992.3 406.3 986.6 406.1 982.9 406.3 C979.2 406.5 975.5 406.8 971.8 407.4 C968.2 408.0 964.7 408.8 961.3 410.0 C957.9 411.1 954.5 412.6 951.4 414.3 C948.4 416.1 945.4 418.1 942.8 420.3 C940.1 422.6 937.6 425.1 935.5 427.8 C933.4 430.4 931.6 433.4 930.0 436.4 C928.5 439.5 927.3 442.7 926.2 446.1 C925.2 449.4 924.5 452.9 923.9 456.5 C923.4 460.1 923.0 463.8 922.9 467.5 C922.7 471.3 922.7 475.1 922.8 478.9 C923.0 482.7 923.3 486.6 923.7 490.4 C924.0 494.2 924.6 498.0 925.1 501.7 C925.7 505.5 926.4 509.2 927.1 512.9 C927.9 516.6 928.7 520.3 929.6 524.0 C930.5 527.6 931.5 531.2 932.6 534.8 C933.6 538.3 934.8 541.9 936.0 545.4 C937.2 548.9 938.5 552.4 939.9 555.8 C941.2 559.3 942.7 562.7 944.2 566.1 C945.7 569.4 947.2 572.8 948.9 576.1 C950.5 579.4 952.2 582.7 953.9 585.9 C955.7 589.2 957.5 592.4 959.3 595.6 C961.2 598.8 963.1 601.9 965.1 605.0 C967.0 608.2 969.0 611.2 971.1 614.3 C973.2 617.3 975.3 620.4 977.4 623.3 C979.6 626.3 981.8 629.3 984.0 632.2 C986.2 635.1 988.5 638.0 990.8 640.8 C993.2 643.7 995.5 646.5 997.9 649.3 C1000.3 652.1 1002.7 654.8 1005.1 657.6 C1007.6 660.3 1010.1 663.0 1012.6 665.7 C1015.1 668.3 1017.7 671.0 1020.2 673.6 C1022.8 676.2 1025.4 678.8 1028.1 681.3 C1030.7 683.9 1033.3 686.4 1036.0 689.0 C1038.7 691.5 1041.4 694.0 1044.1 696.4 C1046.9 698.9 1049.6 701.4 1052.4 703.8 C1055.2 706.2 1058.0 708.6 1060.8 711.0 C1063.6 713.4 1066.4 715.8 1069.2 718.2 C1072.1 720.5 1074.9 722.9 1077.8 725.2 C1080.7 727.5 1083.6 729.8 1086.5 732.1 C1089.4 734.4 1092.3 736.7 1095.2 739.0 C1098.1 741.3 1101.0 743.5 1104.0 745.8 C1106.9 748.0 1109.8 750.3 1112.8 752.5 C1115.7 754.8 1118.7 757.0 1121.7 759.2 C1124.6 761.4 1127.6 763.7 1130.5 765.9 C1133.5 768.1 1136.4 770.3 1139.4 772.5 C1142.4 774.7 1145.3 776.9 1148.3 779.1 C1151.3 781.3 1154.3 783.5 1157.2 785.6 C1160.2 787.8 1163.2 790.0 1166.2 792.1 C1169.2 794.3 1172.2 796.4 1175.2 798.5 C1178.2 800.6 1181.2 802.7 1184.2 804.8 C1187.2 806.9 1190.2 809.0 1193.3 811.1 C1196.3 813.1 1199.4 815.1 1202.4 817.2 C1205.5 819.2 1208.6 821.2 1211.6 823.2 C1214.7 825.1 1217.8 827.1 1220.9 829.0 C1224.0 831.0 1227.2 832.9 1230.3 834.7 C1233.4 836.6 1236.6 838.5 1239.8 840.3 C1242.9 842.1 1246.1 843.9 1249.3 845.7 C1252.5 847.5 1255.8 849.2 1259.0 850.9 C1262.2 852.7 1265.5 854.3 1268.8 856.0 C1272.1 857.6 1275.4 859.2 1278.7 860.8 C1282.0 862.4 1285.4 863.9 1288.7 865.5 C1292.1 867.0 1295.5 868.4 1298.9 869.9 C1302.4 871.3 1305.8 872.7 1309.3 874.0 C1312.7 875.4 1316.2 876.7 1319.8 877.9 C1323.3 879.2 1326.8 880.4 1330.4 881.6 C1334.0 882.8 1337.6 883.9 1341.2 885.0 C1344.9 886.1 1348.5 887.1 1352.2 888.1 C1355.9 889.1 1359.7 890.1 1363.4 890.9 C1367.2 891.8 1371.0 892.7 1374.8 893.5 C1378.6 894.2 1382.4 894.9 1386.2 895.5 C1390.0 896.0 1393.8 896.5 1397.5 896.7 C1401.3 897.0 1404.9 897.1 1408.5 897.0 C1412.1 896.9 1415.6 896.6 1419.0 896.0 C1422.3 895.4 1425.6 894.6 1428.7 893.4 C1431.8 892.3 1434.8 890.9 1437.5 889.1 C1440.3 887.3 1442.9 885.1 1445.2 882.7 C1447.6 880.3 1449.7 877.6 1451.6 874.7 C1453.4 871.7 1455.0 868.5 1456.3 865.2 C1457.5 861.9 1458.5 858.4 1459.1 854.8 C1459.8 851.2 1460.1 847.4 1460.2 843.7 C1460.2 839.9 1460.0 836.0 1459.6 832.2 C1459.2 828.3 1458.5 824.4 1457.7 820.6 C1456.8 816.7 1455.8 812.9 1454.6 809.2 C1453.4 805.4 1452.1 801.7 1450.7 798.2 C1449.2 794.6 1447.7 791.2 1446.0 787.8 C1444.4 784.4 1442.6 781.2 1440.8 777.9 C1439.0 774.7 1437.1 771.6 1435.1 768.5 C1433.1 765.4 1431.1 762.4 1429.0 759.4 C1427.0 756.4 1424.8 753.5 1422.7 750.6 C1420.5 747.6 1418.4 744.7 1416.2 741.8 C1414.0 738.8 1411.8 735.9 1409.5 733.0 C1407.3 730.1 1405.1 727.2 1402.8 724.3 C1400.6 721.4 1398.3 718.5 1396.0 715.6 C1393.8 712.7 1391.5 709.8 1389.2 706.9 C1386.9 704.0 1384.6 701.1 1382.2 698.2 C1379.9 695.3 1377.6 692.5 1375.3 689.6 C1372.9 686.7 1370.6 683.8 1368.2 681.0 C1365.9 678.1 1363.5 675.3 1361.1 672.4 C1358.8 669.6 1356.4 666.7 1354.0 663.9 C1351.6 661.0 1349.3 658.2 1346.9 655.4 C1344.5 652.5 1342.1 649.7 1339.7 646.9 C1337.3 644.1 1334.9 641.3 1332.5 638.5 C1330.1 635.7 1327.7 632.9 1325.3 630.1 C1322.8 627.3 1320.4 624.6 1318.0 621.8 C1315.6 619.0 1313.1 616.3 1310.7 613.5 C1308.2 610.8 1305.8 608.1 1303.3 605.3 C1300.9 602.6 1298.4 599.9 1295.9 597.2 C1293.4 594.5 1290.9 591.8 1288.4 589.1 C1285.9 586.4 1283.4 583.8 1280.9 581.1 C1278.4 578.4 1275.9 575.8 1273.3 573.2 C1270.8 570.5 1268.2 567.9 1265.6 565.3 C1263.1 562.7 1260.5 560.1 1257.9 557.5 C1255.3 555.0 1252.7 552.4 1250.1 549.9 C1247.4 547.3 1244.8 544.8 1242.2 542.3 C1239.5 539.7 1236.8 537.2 1234.2 534.7 C1231.5 532.3 1228.8 529.8 1226.1 527.3 C1223.3 524.9 1220.6 522.4 1217.9 520.0 C1215.1 517.6 1212.3 515.2 1209.5 512.8 C1206.8 510.4 1204.0 508.1 1201.1 505.7 C1198.3 503.4 1195.5 501.1 1192.6 498.8 C1189.7 496.4 1186.9 494.2 1184.0 491.9 C1181.1 489.6 1178.1 487.4 1175.2 485.1 C1172.2 482.9 1169.3 480.7 1166.3 478.5 C1163.3 476.3 1160.3 474.2 1157.2 472.0 C1154.2 469.9 1151.1 467.8 1148.1 465.7 C1145.0 463.6 1141.9 461.5 1138.7 459.5 C1135.6 457.4 1132.5 455.4 1129.3 453.4 C1126.1 451.5 1122.9 449.5 1119.7 447.6 C1116.5 445.7 1113.2 443.9 1110.0 442.0 C1106.7 440.2 1103.4 438.5 1100.1 436.7 C1096.8 435.0 1093.4 433.4 1090.1 431.8 C1086.7 430.2 1083.3 428.6 1079.9 427.1 C1076.5 425.6 1073.1 424.2 1069.7 422.8 C1066.2 421.5 1062.7 420.2 1059.3 419.0 C1055.8 417.8 1052.3 416.6 1048.7 415.6 C1045.2 414.5 1041.6 413.5 1038.1 412.6 C1034.5 411.7 1030.9 410.9 1027.3 410.2 C1023.7 409.5 1020.0 408.9 1016.4 408.3 C1012.7 407.8 1009.0 407.3 1005.3 407.0 C1001.6 406.7 996.0 406.4 994.1 406.3 Z" fill="url(#gI)"/><path d="M995.0 318.7 L1812.5 367.6 A227.6 293.4 0 0 1 1812.5 954.4 L1426.4 976.3 C1424.3 976.5 1418.2 977.3 1414.0 977.6 C1409.9 977.9 1405.7 978.0 1401.5 977.9 C1397.3 977.9 1393.2 977.7 1389.0 977.4 C1384.9 977.1 1380.8 976.6 1376.8 976.1 C1372.7 975.5 1368.7 974.9 1364.7 974.1 C1360.7 973.3 1356.8 972.4 1352.8 971.5 C1348.9 970.5 1345.0 969.4 1341.1 968.2 C1337.3 967.1 1333.4 965.8 1329.6 964.5 C1325.8 963.2 1322.0 961.8 1318.3 960.3 C1314.5 958.9 1310.8 957.3 1307.0 955.7 C1303.3 954.1 1299.6 952.5 1296.0 950.8 C1292.3 949.1 1288.7 947.3 1285.0 945.5 C1281.4 943.8 1277.8 941.9 1274.2 940.1 C1270.7 938.2 1267.1 936.3 1263.5 934.4 C1260.0 932.5 1256.5 930.6 1253.0 928.6 C1249.5 926.6 1246.0 924.6 1242.5 922.5 C1239.0 920.5 1235.6 918.4 1232.2 916.3 C1228.7 914.2 1225.3 912.1 1221.9 910.0 C1218.5 907.8 1215.1 905.6 1211.8 903.4 C1208.4 901.2 1205.0 899.0 1201.7 896.8 C1198.4 894.5 1195.0 892.2 1191.7 889.9 C1188.4 887.6 1185.1 885.3 1181.8 882.9 C1178.6 880.6 1175.3 878.2 1172.0 875.8 C1168.8 873.5 1165.6 871.0 1162.3 868.6 C1159.1 866.2 1155.9 863.7 1152.7 861.3 C1149.5 858.8 1146.3 856.3 1143.1 853.8 C1139.9 851.3 1136.8 848.8 1133.6 846.3 C1130.4 843.7 1127.3 841.2 1124.2 838.6 C1121.0 836.0 1117.9 833.4 1114.8 830.8 C1111.7 828.3 1108.5 825.6 1105.4 823.0 C1102.3 820.4 1099.2 817.8 1096.2 815.1 C1093.1 812.5 1090.0 809.8 1086.9 807.1 C1083.9 804.5 1080.8 801.8 1077.8 799.1 C1074.7 796.4 1071.7 793.7 1068.7 790.9 C1065.7 788.2 1062.7 785.5 1059.7 782.7 C1056.7 780.0 1053.7 777.2 1050.8 774.4 C1047.9 771.6 1044.9 768.8 1042.0 765.9 C1039.1 763.1 1036.2 760.3 1033.4 757.4 C1030.5 754.5 1027.7 751.6 1024.9 748.7 C1022.1 745.8 1019.3 742.9 1016.5 739.9 C1013.8 737.0 1011.1 734.0 1008.4 731.0 C1005.7 728.0 1003.0 725.0 1000.4 721.9 C997.8 718.9 995.2 715.8 992.6 712.7 C990.0 709.6 987.5 706.5 985.0 703.3 C982.5 700.2 980.1 697.0 977.7 693.8 C975.3 690.6 972.9 687.4 970.6 684.1 C968.2 680.8 966.0 677.5 963.7 674.2 C961.5 670.9 959.3 667.5 957.1 664.1 C955.0 660.8 952.9 657.3 950.8 653.9 C948.8 650.4 946.8 646.9 944.8 643.4 C942.8 639.9 940.9 636.4 939.1 632.8 C937.2 629.2 935.4 625.6 933.7 621.9 C932.0 618.2 930.3 614.5 928.6 610.8 C927.0 607.1 925.4 603.3 923.9 599.5 C922.3 595.8 920.8 592.0 919.4 588.1 C917.9 584.3 916.5 580.5 915.1 576.6 C913.7 572.8 912.4 568.9 911.1 565.0 C909.8 561.1 908.5 557.3 907.2 553.4 C906.0 549.5 904.7 545.6 903.5 541.7 C902.3 537.9 901.1 534.0 899.9 530.1 C898.7 526.3 897.6 522.4 896.4 518.6 C895.3 514.7 894.2 510.9 893.1 507.1 C892.1 503.2 891.0 499.4 890.1 495.6 C889.1 491.7 888.2 487.9 887.4 484.0 C886.6 480.2 885.9 476.3 885.2 472.4 C884.6 468.5 884.1 464.6 883.6 460.6 C883.2 456.7 882.9 452.7 882.7 448.7 C882.6 444.7 882.5 440.7 882.6 436.6 C882.8 432.5 883.0 428.3 883.5 424.2 C883.9 420.0 884.5 415.8 885.2 411.7 C886.0 407.5 886.9 403.3 888.0 399.2 C889.1 395.1 890.4 391.0 891.8 387.1 C893.3 383.1 894.9 379.2 896.7 375.5 C898.5 371.8 900.5 368.1 902.7 364.7 C904.8 361.3 907.2 358.0 909.7 354.9 C912.3 351.9 915.0 349.0 917.9 346.4 C920.8 343.7 923.9 341.3 927.1 339.1 C930.3 336.8 933.7 334.8 937.2 333.0 C940.6 331.1 944.3 329.5 947.9 328.0 C951.6 326.6 955.4 325.3 959.3 324.2 C963.1 323.1 967.0 322.2 971.0 321.4 C974.9 320.6 979.0 320.0 983.0 319.6 C987.0 319.1 993.0 318.8 995.0 318.7 Z" fill="none" stroke="#4a94ea" stroke-width="1.6"/><path d="M1426.4 976.3 C1428.4 975.9 1434.5 974.9 1438.4 973.9 C1442.3 972.9 1446.1 971.7 1449.8 970.3 C1453.5 968.9 1457.1 967.2 1460.5 965.3 C1463.9 963.5 1467.2 961.3 1470.3 958.9 C1473.3 956.5 1476.2 953.8 1478.9 950.9 C1481.5 948.0 1483.9 944.8 1486.1 941.4 C1488.2 938.1 1490.1 934.5 1491.7 930.8 C1493.3 927.1 1494.7 923.2 1495.7 919.3 C1496.7 915.4 1497.4 911.4 1497.9 907.4 C1498.4 903.4 1498.6 899.3 1498.7 895.2 C1498.8 891.1 1498.7 886.9 1498.6 882.8 C1498.4 878.7 1498.2 874.6 1497.9 870.6 C1497.5 866.5 1497.1 862.5 1496.6 858.5 C1496.1 854.4 1495.6 850.4 1494.9 846.5 C1494.3 842.5 1493.6 838.5 1492.8 834.6 C1492.0 830.6 1491.1 826.7 1490.2 822.8 C1489.3 818.9 1488.3 815.0 1487.2 811.1 C1486.1 807.3 1485.0 803.4 1483.8 799.6 C1482.6 795.8 1481.3 792.0 1480.0 788.2 C1478.7 784.4 1477.3 780.6 1475.9 776.8 C1474.5 773.1 1473.0 769.3 1471.5 765.6 C1469.9 761.9 1468.4 758.2 1466.7 754.5 C1465.1 750.8 1463.4 747.1 1461.7 743.5 C1459.9 739.8 1458.2 736.2 1456.4 732.5 C1454.5 728.9 1452.7 725.3 1450.8 721.7 C1448.9 718.1 1447.0 714.5 1445.0 711.0 C1443.0 707.4 1441.0 703.8 1439.0 700.3 C1437.0 696.8 1434.9 693.2 1432.8 689.7 C1430.7 686.2 1428.6 682.7 1426.5 679.2 C1424.3 675.7 1422.1 672.3 1420.0 668.8 C1417.8 665.4 1415.6 661.9 1413.3 658.5 C1411.1 655.1 1408.8 651.6 1406.6 648.2 C1404.3 644.8 1402.0 641.4 1399.8 638.0 C1397.5 634.7 1395.2 631.3 1392.9 627.9 C1390.6 624.6 1388.3 621.2 1385.9 617.9 C1383.6 614.5 1381.3 611.2 1378.9 607.9 C1376.6 604.6 1374.2 601.3 1371.9 598.0 C1369.5 594.7 1367.1 591.4 1364.8 588.2 C1362.4 584.9 1360.0 581.6 1357.6 578.4 C1355.2 575.2 1352.7 571.9 1350.3 568.7 C1347.9 565.5 1345.4 562.3 1343.0 559.1 C1340.5 556.0 1338.0 552.8 1335.6 549.6 C1333.1 546.5 1330.6 543.4 1328.0 540.2 C1325.5 537.1 1323.0 534.0 1320.4 530.9 C1317.9 527.8 1315.3 524.8 1312.8 521.7 C1310.2 518.6 1307.6 515.6 1305.0 512.6 C1302.3 509.6 1299.7 506.5 1297.1 503.6 C1294.4 500.6 1291.7 497.6 1289.1 494.6 C1286.4 491.7 1283.7 488.7 1280.9 485.8 C1278.2 482.9 1275.5 480.0 1272.7 477.1 C1269.9 474.2 1267.1 471.4 1264.3 468.5 C1261.5 465.7 1258.7 462.9 1255.8 460.1 C1253.0 457.3 1250.1 454.5 1247.2 451.7 C1244.3 448.9 1241.4 446.2 1238.5 443.5 C1235.5 440.7 1232.5 438.0 1229.6 435.4 C1226.6 432.7 1223.6 430.0 1220.5 427.4 C1217.5 424.7 1214.4 422.1 1211.3 419.5 C1208.2 416.9 1205.1 414.3 1202.0 411.8 C1198.8 409.2 1195.6 406.7 1192.5 404.2 C1189.3 401.7 1186.0 399.2 1182.8 396.7 C1179.5 394.3 1176.2 391.8 1172.9 389.4 C1169.6 387.0 1166.3 384.6 1162.9 382.2 C1159.6 379.9 1156.2 377.5 1152.7 375.2 C1149.3 372.9 1145.8 370.6 1142.4 368.4 C1138.9 366.1 1135.4 363.9 1131.8 361.8 C1128.3 359.6 1124.7 357.5 1121.1 355.5 C1117.5 353.4 1113.9 351.4 1110.3 349.5 C1106.7 347.5 1103.0 345.7 1099.3 343.9 C1095.6 342.1 1091.9 340.3 1088.2 338.7 C1084.4 337.1 1080.7 335.5 1076.9 334.0 C1073.1 332.5 1069.4 331.1 1065.5 329.8 C1061.7 328.5 1057.9 327.3 1054.0 326.2 C1050.2 325.2 1046.3 324.2 1042.4 323.3 C1038.5 322.4 1034.6 321.6 1030.7 321.0 C1026.8 320.4 1022.8 319.8 1018.9 319.4 C1014.9 319.0 1011.0 318.8 1007.0 318.6 C1003.0 318.5 997.0 318.7 995.0 318.7" fill="none" stroke="#4a94ea" stroke-width="1.3"/><path d="M1812.5 367.6 A227.6 293.4 0 0 0 1672.4 429.8" fill="none" stroke="#4a94ea" stroke-width="1.4"/><path d="M1672.4 429.8 A227.6 293.4 0 0 0 1584.9 661.0" fill="none" stroke="#6f9a98" stroke-width="1.7"/><path d="M1584.9 661.0 A227.6 293.4 0 0 0 1812.5 954.4" fill="none" stroke="#8fb4a0" stroke-width="1.3"/></svg>
<svg class="abs" style="left:0;top:0" width="2575" height="1346" viewBox="0 0 2575 1346" font-family="Liberation Sans, sans-serif">
<defs>
<linearGradient id="hb" x1="0" y1="0" x2="1" y2="1"><stop offset="0" stop-color="#a6d8ec"/><stop offset="1" stop-color="#5a9cbc"/></linearGradient>
<radialGradient id="lens" cx=".4" cy=".35" r=".7"><stop offset="0" stop-color="#fbfdfd"/><stop offset="1" stop-color="#d8e2e2"/></radialGradient>
<linearGradient id="cubeb" x1="0" y1="0" x2="1" y2="1"><stop offset="0" stop-color="#9ad4ea"/><stop offset="1" stop-color="#4d92b4"/></linearGradient>
<linearGradient id="mon" x1="0" y1="0" x2="0" y2="1"><stop offset="0" stop-color="#c8c8c8"/><stop offset="1" stop-color="#f2f2f2"/></linearGradient>
<radialGradient id="gball" cx=".35" cy=".3" r=".8"><stop offset="0" stop-color="#f4f4f4"/><stop offset="1" stop-color="#d4d4d4"/></radialGradient>
<radialGradient id="shine" cx=".3" cy=".26" r=".36"><stop offset="0" stop-color="#fff" stop-opacity=".6"/><stop offset="1" stop-color="#fff" stop-opacity="0"/></radialGradient>
<linearGradient id="ylw" x1="0" y1="0" x2="1" y2="1"><stop offset="0" stop-color="#ffe873"/><stop offset="1" stop-color="#f0be00"/></linearGradient>
<linearGradient id="helpg" x1="0" y1="0" x2="1" y2="1"><stop offset="0" stop-color="#fdfdfd"/><stop offset="1" stop-color="#d6d6d6"/></linearGradient>
<linearGradient id="surf" x1="0" y1="0" x2="1" y2="1"><stop offset="0" stop-color="#7cc4de"/><stop offset="1" stop-color="#2f86a8"/></linearGradient>
<linearGradient id="bk" x1="0" y1="0" x2="1" y2="0"><stop offset="0" stop-color="#fff"/><stop offset="1" stop-color="#b8b8b8"/></linearGradient>
<radialGradient id="refr" cx=".4" cy=".35" r=".7"><stop offset="0" stop-color="#6cc0f8"/><stop offset="1" stop-color="#1560b8"/></radialGradient>
</defs>
<!-- ===== heads-up toolbar ===== -->
<g id="zoomfit">
 <path d="M1210.5 33.5 L1202 41" stroke="#5f7f8f" stroke-width="6" stroke-linecap="round"/>
 <path d="M1210.5 33.5 L1202.3 40.7" stroke="#8fcbe4" stroke-width="3.6" stroke-linecap="round"/>
 <circle cx="1216.3" cy="26.6" r="8.6" fill="url(#lens)" stroke="#8b8f90" stroke-width="1.7"/>
 <path d="M1216.3 20.2 l2.6 3.2 h-5.2z M1216.3 33 l2.6 -3.2 h-5.2z M1209.9 26.6 l3.2 -2.6 v5.2z M1222.7 26.6 l-3.2 -2.6 v5.2z" fill="#5e5e5e"/>
</g>
<g id="zoomarea">
 <rect x="1247.5" y="16.6" width="16.8" height="16.6" fill="none" stroke="#444" stroke-width="1.1" stroke-dasharray="2.6 1.8"/>
 <path d="M1247.4 34 L1239 41.5" stroke="#5f7f8f" stroke-width="6" stroke-linecap="round"/>
 <path d="M1247.4 34 L1239.3 41.2" stroke="#8fcbe4" stroke-width="3.6" stroke-linecap="round"/>
 <circle cx="1253.6" cy="27.2" r="8.6" fill="url(#lens)" stroke="#8b8f90" stroke-width="1.7"/>
</g>
<g id="prevview">
 <path d="M1276.6 33.6 L1296.6 17.2 L1301.6 19.6 L1303 24.2 L1285.2 43.2 Q1279 43.2 1276.6 33.6Z" fill="#e8ecec" stroke="#7f8486" stroke-width="1.4" stroke-linejoin="round"/>
 <path d="M1289 24 L1296 33 M1293 20.5 L1299.6 29" stroke="#8b9092" stroke-width="1.2"/>
 <ellipse cx="1281.6" cy="37.6" rx="3.2" ry="5.4" transform="rotate(-40 1281.6 37.6)" fill="#d0d4d4" stroke="#7f8486" stroke-width="1.2"/>
 <path d="M1303.2 31.6 H1295.4 V28.2 L1288.4 34.1 L1295.4 40 V36.6 H1303.2Z" fill="#7cbcdc" stroke="#4a87a8" stroke-width="1"/>
</g>
<g id="section" opacity=".55">
 <path d="M1314 22 Q1318 17.5 1327 17.5 Q1336 17.5 1340.4 22 V38 Q1336.5 34 1333 36 V41 Q1327 38 1322 43 L1314 39Z" fill="#e2e2e2" stroke="#cfcfcf" stroke-width="1"/>
 <path d="M1322 26 V43 M1333 24 V36" stroke="#d0d0d0" stroke-width="1"/>
</g>
<g id="orient">
 <path d="M1351.4 24.4 L1359.4 16.4 H1378.6 V35.6 L1370.6 43.4" fill="#fff" stroke="#505456" stroke-width="1.2" stroke-linejoin="round"/>
 <path d="M1370.6 24.4 L1378.6 16.4 M1359.4 16.4 V24 M1378.6 35.6 H1371" stroke="#505456" stroke-width="1.1"/>
 <rect x="1351.4" y="24.4" width="19.2" height="19" fill="url(#cubeb)" stroke="#3e6a7e" stroke-width="1.2"/>
 <path d="M1365.4 17 V22 M1378.2 30 H1373.5" stroke="#444" stroke-width="1.3" fill="none"/><path d="M1362.9 21.4 H1367.9 L1365.4 24Z M1374.1 27.8 V32.2 L1371.4 30Z" fill="#444"/>
</g>
<path d="M1387.4 28.4 h6.4 l-3.2 3.6z M1440.3 28.4 h6.4 l-3.2 3.6z M1493.2 28.4 h6.4 l-3.2 3.6z M1584 28.4 h6.4 l-3.2 3.6z M1637 28.4 h6.4 l-3.2 3.6z" fill="#9c9c9c"/>
<g id="dispstyle">
 <path d="M1406.3 22.2 L1418.6 16.8 L1429.6 21.6 L1417 26.8Z" fill="#dff0f6" stroke="#5a5e60" stroke-width="1"/>
 <path d="M1406.3 22.2 L1417 26.8 V42.2 L1406.3 36.6Z" fill="url(#cubeb)" stroke="#4a4e50" stroke-width="1.2" stroke-linejoin="round"/>
 <path d="M1417 26.8 L1429.6 21.6 V37 L1417 42.2Z" fill="#f1f1f1" stroke="#4a4e50" stroke-width="1.2" stroke-linejoin="round"/>
 <path d="M1417 26.8 L1421.8 24.8 V40.2 L1417 42.2Z" fill="#6fb6d4"/>
 <path d="M1418.6 16.8 L1429.6 21.6" stroke="#e05050" stroke-width=".8" opacity=".6"/>
</g>
<g id="eye">
 <path d="M1456.6 30 Q1470.5 15.5 1484.6 30 Q1470.5 44.5 1456.6 30Z" fill="#f3f3f3" stroke="#8c8c8c" stroke-width="2"/>
 <circle cx="1470.7" cy="28.8" r="6.6" fill="#8e8e8e"/>
 <path d="M1470.7 22.2 A6.6 6.6 0 0 0 1470.7 35.4Z" fill="#4c4c4c"/>
 <rect x="1469.8" y="19.2" width="2" height="21.6" fill="#555"/>
</g>
<g id="editapp" opacity=".8">
 <circle cx="1522.2" cy="28" r="12.8" fill="url(#gball)"/>
 <path d="M1526 38 L1536 27 L1540.5 31 L1528 44 L1522 45.5Z" fill="#dedede" stroke="#d0d0d0" stroke-width=".8"/>
 <ellipse cx="1517.5" cy="22" rx="5" ry="3.6" fill="#fff" opacity=".7"/>
</g>
<g id="scene" opacity=".85">
 <rect x="1548.2" y="26.4" width="27.4" height="17.4" fill="#dcdcdc"/>
 <path d="M1551 31 h5 v3.6 h-5z M1568 31 h5 v3.6 h-5z M1554 38.5 h5.5 v4 h-5.5z M1565 38.5 h5.5 v4 h-5.5z" fill="#f6f6f6"/>
 <circle cx="1561.7" cy="27" r="10.8" fill="url(#gball)"/>
 <ellipse cx="1558" cy="21.5" rx="4" ry="3" fill="#fff" opacity=".7"/>
</g>
<g id="viewset">
 <rect x="1602.4" y="18.4" width="25.4" height="17.2" rx="1" fill="url(#mon)" stroke="#55585a" stroke-width="2"/>
 <rect x="1613.4" y="36.4" width="3.4" height="3" fill="#6a6a6a"/>
 <path d="M1609.8 40.8 l1.4 -1.8 h7.6 l1.4 1.8z" fill="#55585a"/>
</g>
<!-- ===== part icon symbol (25x28 box) ===== -->
<symbol id="part" viewBox="0 0 25 28" overflow="visible">
 <path d="M12.2 0.3 L19.4 2.4 V11.7 L24.5 14 V23.3 L17.5 27.7 L0.4 16.3 V8.9 L4.7 7 L6.2 7.7 V3.3Z" fill="#f6c90a" stroke="#5e4d00" stroke-width="1" stroke-linejoin="round"/>
 <path d="M6.2 3.3 L12.2 0.3 L19.4 2.4 L11.4 5.8Z" fill="#ffe96e" stroke="#5e4d00" stroke-width=".8" stroke-linejoin="round"/>
 <path d="M11.4 5.8 L19.4 2.4 V11.7 L13.6 13.8 L11.4 12.6Z" fill="#f3d648" stroke="#5e4d00" stroke-width=".8" stroke-linejoin="round"/>
 <path d="M13.6 13.8 L19.4 11.7 L24.5 14 L17.8 16.9Z" fill="#ffe96e" stroke="#5e4d00" stroke-width=".8" stroke-linejoin="round"/>
 <path d="M17.8 16.9 L24.5 14 V23.3 L17.5 27.7Z" fill="#f5d84c" stroke="#5e4d00" stroke-width=".8" stroke-linejoin="round"/>
 <path d="M0.4 8.9 L4.7 7 L6.2 7.7 L6.2 11" fill="none" stroke="#5e4d00" stroke-width=".8"/>
 <path d="M6.2 3.3 L11.4 5.8 V12.6 L17.8 16.9 L17.5 27.7" fill="none" stroke="#5e4d00" stroke-width=".8"/>
</symbol>
<use href="#part" x="23.8" y="80.8" width="25" height="28"/>
<use href="#part" x="316.1" y="48" width="25" height="28"/>
<path d="M288.9 56 L294.9 61.5 L288.9 67Z" fill="#222"/>
<!-- property manager tab icon -->
<symbol id="plist" viewBox="0 0 28 26" overflow="visible">
 <rect x=".6" y=".6" width="26.8" height="24.8" rx="1.2" fill="#f4f6f6" stroke="#1f4f6e" stroke-width="1.2"/>
 <rect x="1.2" y="1.2" width="25.6" height="3.4" fill="#3f88b4"/>
 <path d="M1 5 H27" stroke="#1f4f6e" stroke-width=".8"/>
 <rect x="3.4" y="6.8" width="7" height="3.6" rx=".8" fill="#4f9cc4" stroke="#1f4f6e" stroke-width=".9"/>
 <rect x="3.4" y="12.8" width="7" height="3.6" rx=".8" fill="#4f9cc4" stroke="#1f4f6e" stroke-width=".9"/>
 <rect x="3.4" y="18.8" width="7" height="3.6" rx=".8" fill="#4f9cc4" stroke="#1f4f6e" stroke-width=".9"/>
 <path d="M13.4 8.6 H24.8 M13.4 14.6 H24.8 M13.4 20.6 H24.8" stroke="#2c2c2c" stroke-width="1.1"/>
</symbol>
<use href="#plist" x="74" y="82.2" width="28" height="26"/>
<!-- configuration manager icon -->
<g stroke="#2e2e2e" stroke-width="1.2" fill="#f2f2f2">
 <rect x="129.4" y="81.6" width="2.8" height="26.8"/>
 <rect x="132.2" y="86.4" width="6" height="2.4"/>
 <rect x="132.2" y="101.4" width="9" height="2.4"/>
 <rect x="138" y="82" width="10.6" height="11.8" rx="1"/>
 <rect x="141.2" y="97.6" width="10.6" height="11" rx="1"/>
</g>
<!-- dimxpert crosshair -->
<g stroke="#1e1e1e" fill="none">
 <circle cx="192" cy="95" r="10.4" stroke-width="3"/>
 <path d="M178 95 H206.2 M192 80.8 V109.2" stroke-width="2.2"/>
</g>
<!-- appearance ball (display manager) -->
<symbol id="ball" viewBox="0 0 26 26" overflow="visible">
 <circle cx="13" cy="13" r="12.8" fill="#2a6fd0"/>
 <path d="M13 13 L0.2 13 A12.8 12.8 0 0 0 13 25.8 Z" fill="#2fa836"/>
 <path d="M13 13 L13 25.8 A12.8 12.8 0 0 0 25.8 13 Z" fill="#f2c416"/>
 <path d="M13 13 L25.8 13 A12.8 12.8 0 0 0 13 0.2 Z" fill="#d81e1e"/>
 <path d="M0.2 13 Q8 15.5 13 13 Q15.5 8 13 0.2" fill="none" stroke="#fff" stroke-opacity=".25" stroke-width=".8"/>
 <circle cx="13" cy="13" r="12.8" fill="url(#shine)"/>
 <circle cx="13" cy="13" r="12.8" fill="none" stroke="#000" stroke-opacity=".25" stroke-width=".8"/>
</symbol>
<g>
 <clipPath id="dmc"><circle cx="243.9" cy="95" r="13"/></clipPath>
 <circle cx="243.9" cy="95" r="13" fill="#2a6cd0"/>
 <g clip-path="url(#dmc)">
  <path d="M229 96.0L230.8 96.0Q237.6 98.6 245.2 94.4Q241.3 101.3 242.9 108.2L242.9 110 L229 110Z" fill="#27a233"/>
  <path d="M245.2 94.4Q241.3 101.300 242.9 108.2L242.9 110 L258 110 L258 97.6 L256.7 97.6Q251.3 97.6 245.2 94.4Z" fill="#f0c414"/>
  <path d="M245.2 94.4Q251.3 97.6 256.7 97.6L258 97.6 L258 80 L245.2 80Z" fill="#d42020"/>
  <path d="M248.3 80 Q247.4 85.5 248.1 89.7Q252.3 95.0 258 93.7 L258 80Z" fill="#0d0506"/>
 </g>
 <circle cx="243.9" cy="95" r="13" fill="url(#shine)"/>
 <circle cx="243.9" cy="95" r="13" fill="none" stroke="#000" stroke-opacity=".3" stroke-width=".8"/>
</g>
<!-- thicken icon -->
<g>
 <path d="M20.6 131.4 L27 127.6 Q29.5 129 31.5 126.6 Q33.5 124.4 36 125.4 L38.6 128.2 V141.6 Q35 141.2 33.2 143.4 Q31 145.6 27.6 144.4 L25.4 148 L20.6 142.8Z" fill="#57a3c9" stroke="#244f66" stroke-width="1" stroke-linejoin="round"/>
 <path d="M20.6 131.4 L27 127.6 Q29.5 129 31.5 126.6 Q33.5 124.4 36 125.4 L38.6 128.2 Q35.5 128 33.6 130.2 Q31.2 132.6 27.8 131.2 L25.6 135Z" fill="#eef5f8" stroke="#244f66" stroke-width=".8" stroke-linejoin="round"/>
 <path d="M25.6 135 V148" stroke="#244f66" stroke-width=".8"/>
 <path d="M20.6 131.4 L25.6 135 V148 L20.6 142.8Z" fill="#2f7396"/>
 <path d="M42.8 128.4 V139" stroke="#1a1a1a" stroke-width="2"/>
 <path d="M38 137.6 Q42.8 139.4 47.4 137.6 L42.8 143.4Z" fill="#1a1a1a"/>
</g>
<!-- help -->
<circle cx="251.1" cy="135.9" r="13.6" fill="url(#helpg)" stroke="#4e4e4e" stroke-width="1.3"/>
<text x="251.1" y="143.3" font-size="21" font-weight="700" fill="#3a7ca8" text-anchor="middle">?</text>
<!-- ok / cancel -->
<path d="M18.4 175.2 L25.8 182 L39.2 167.6" fill="none" stroke="#3b9a1c" stroke-width="4.2"/>
<path d="M60.4 168.3 L74.8 182.7 M74.8 168.3 L60.4 182.7" fill="none" stroke="#e2321c" stroke-width="3.8"/>
<!-- chevron -->
<path d="M249.2 223.8 L257 216 L264.8 223.8" fill="none" stroke="#7c7c7c" stroke-width="3"/>
<!-- surface icon -->
<path d="M21.4 257.2 Q25 249 31.5 248.8 Q35.8 248.6 38.6 243 L47.8 251.6 Q47.6 256.6 42.4 257.8 Q36.4 259 33.8 263.4 L32.4 269.3Z" fill="url(#surf)" stroke="#236986" stroke-width="1" stroke-linejoin="round"/>
<path d="M24.5 253.5 L35.5 265 M29.5 249.5 L41.5 258.5 M35.5 247 L46.5 255" stroke="#9ad4e8" stroke-width=".8" opacity=".6"/>
<!-- direction arrow -->
<path d="M27.2 380.4 L40.6 367.8" stroke="#2a7aa0" stroke-width="3.6"/>
<path d="M33.1 364.2 H44.2 V374.8Z" fill="#2a7aa0"/>
<!-- T1 icon -->
<path d="M36.2 430.8 L48.6 443 M21.8 445.2 L34.2 457.4" stroke="#35627e" stroke-width="2"/>
<path d="M25.6 442.4 L34 434.2" stroke="#1e1e1e" stroke-width="1.8"/>
<path d="M23.4 444.6 L24.8 439.6 L28.4 443.2Z M36.2 432 L34.8 437 L31.2 433.4Z" fill="#1e1e1e"/>
<!-- ===== window controls ===== -->
<g fill="none" stroke="#9a9a9a" stroke-width="1.2">
 <rect x="2381.6" y="19.8" width="17" height="20.6"/>
 <rect x="2419.8" y="19.8" width="17" height="20.6"/>
 <rect x="2499.8" y="21" width="14.8" height="11.6"/>
 <rect x="2492.8" y="28" width="14.8" height="11.4" fill="#fff"/>
 <path d="M2534.6 22.8 L2549.6 37.6 M2549.6 22.8 L2534.6 37.6" stroke-width="1.5"/>
</g>
<path d="M2381 19.2 h18.2 v2 h-18.2z M2419.2 19.2 h18.2 v2 h-18.2z M2499.2 20.4 h16 v1.8 h-16z M2492.2 27.4 h16 v1.8 h-16z M2458.2 37 h15.6 v2.8 h-15.6z" fill="#9a9a9a"/>
<path d="M2382.2 29.8 L2385.8 26.2 V33.4Z M2436.2 29.8 L2432.6 26.2 V33.4Z" fill="#9a9a9a"/>
<!-- confirmation corner -->
<path d="M2414.4 74.4 L2427.3 87 L2449.4 64" fill="none" stroke="#d3ecd1" stroke-width="10"/>
<path d="M2484.8 109.3 L2510 134.5 M2510 109.3 L2484.8 134.5" fill="none" stroke="#f8d5d3" stroke-width="10.5" stroke-linecap="round"/>
<!-- ===== task pane ===== -->
<rect x="2528" y="85" width="39" height="251.5" fill="#d5d5d5"/>
<rect x="2528" y="228.5" width="39" height="35.5" fill="#f5f5f5"/>
<path d="M2528.5 85 V336.5 M2528 85.5 H2567 M2528 120.5 H2567 M2528 156.5 H2567 M2528 192.5 H2567 M2528 228.5 H2567 M2528 264.5 H2567 M2528 300.5 H2567 M2528 336.5 H2567" stroke="#8e8e8e" stroke-width="1" fill="none"/>
<!-- home -->
<path d="M2537.6 102 V116.6 H2558.4 V102" fill="#f6f6f6" stroke="#2a2a2a" stroke-width="1.2"/>
<path d="M2534.6 102.8 L2547.9 90.6 L2561.2 102.8" fill="none" stroke="#1d4a68" stroke-width="3.6" stroke-linejoin="miter"/>
<path d="M2535.4 102.4 L2547.9 91 L2560.4 102.4" fill="none" stroke="#4d95c0" stroke-width="1.6"/>
<rect x="2544.8" y="105.4" width="6.6" height="11" fill="#fff" stroke="#2a2a2a" stroke-width="1.1"/>
<rect x="2549" y="110" width="1.8" height="1.8" fill="#2a6a90"/>
<!-- books -->
<g stroke="#2c2c2c" stroke-width="1" stroke-linejoin="round">
 <path d="M2536.3 128.4L2543.4 133.4L2543.4 152.5L2536.3 146.4Z" fill="url(#bk)"/>
 <path d="M2543.4 133.4L2548.3 132.2L2548.3 151.3L2543.4 152.5Z" fill="url(#bk)"/>
 <path d="M2548.3 132.2L2553.4 131.2L2553.4 150.2L2548.3 151.3Z" fill="url(#bk)"/>
 <path d="M2553.4 131.2L2558.5 130.5L2558.5 148.7L2553.4 150.2Z" fill="url(#bk)"/>
 <path d="M2536.3 128.4L2540.5 127.3L2548.3 132.2L2543.4 133.4Z" fill="#fafafa"/>
 <path d="M2541.2 127.6L2545.7 126.2L2553.4 131.2L2548.3 132.2Z" fill="#fafafa"/>
 <path d="M2546.4 126.7L2550.9 125.2L2558.5 130.5L2553.4 131.2Z" fill="#fafafa"/>
</g>
<path d="M2536.3 128.4 V146.4 L2543.4 152.5 L2558.5 148.7" fill="none" stroke="#1c1c1c" stroke-width="1.5" stroke-linejoin="round"/>
<!-- folder -->
<path d="M2532.6 186.8 V165.6 Q2532.6 163.8 2534.4 163.8 H2540.4 L2542.6 166.6 H2556.6 V171.4" fill="#c9c9c9" stroke="#4a4a4a" stroke-width="1.1" stroke-linejoin="round"/>
<path d="M2532.6 186.8 L2540.4 171.4 H2563.8 L2556.2 186.8Z" fill="#f2f2f2" stroke="#4a4a4a" stroke-width="1.1" stroke-linejoin="round"/>
<!-- view palette -->
<rect x="2534.6" y="199.4" width="27.2" height="23.8" fill="#f2f2f2" stroke="#3c3c3c" stroke-width="1.2"/>
<g fill="#fbc70e" stroke="#8a6a00" stroke-width=".8">
 <rect x="2537" y="202" width="11" height="5"/>
 <rect x="2551.4" y="202" width="7.4" height="5"/>
 <path d="M2540.6 211 h3.8 v3.4 h3.4 v5 h-10.8 v-5 h3.6z"/>
</g>
<rect x="2551.6" y="213.4" width="9.6" height="9.2" fill="#d9d9d9" stroke="#555" stroke-width=".8"/>
<rect x="2551.6" y="213.4" width="9.6" height="2.6" fill="#777"/>
<!-- ball -->
<use href="#ball" x="2535" y="232.8" width="26" height="26"/>
<ellipse cx="2548" cy="258.6" rx="9" ry="1.8" fill="#000" opacity=".12"/>
<!-- refresh -->
<circle cx="2548" cy="319.2" r="13" fill="url(#refr)"/>
<ellipse cx="2543" cy="314" rx="5" ry="4" fill="#9adcff" opacity=".55"/>
<g fill="#f6faff" stroke="#16407a" stroke-width="1" stroke-linejoin="round">
 <path d="M2537.1 312.3Q2543.4 304.3 2553.2 308.1L2558.5 304.2L2558.5 317.1L2545.4 317.1L2549.5 313Q2544 310.4 2537.1 312.3Z"/>
 <path d="M2558.9 325.9Q2552.7 333.9 2542.8 330.1L2537.6 334L2537.6 321.1L2550.6 321.1L2546.6 325.2Q2552.1 327.8 2558.9 325.9Z"/>
</g>
<use href="#plist" x="2534" y="269.8" width="28" height="26"/>
<!-- ===== triad ===== -->
<rect x="336.3" y="1203" width="5.4" height="30" fill="#126b12"/>
<path d="M339.1 1191 L345.3 1204 H333Z" fill="#126b12"/>
<rect x="319" y="1232.2" width="21.4" height="5.4" fill="#0c0cb4"/>
<path d="M308.4 1234.9 L316.2 1229.2 L321 1234.9 L316.6 1240.6Z" fill="#0c0cb4"/>
<rect x="340.2" y="1232.2" width="17" height="5.4" fill="#c81212"/>
<path d="M356 1234.9 L361 1229.2 L370 1234.7 L362 1240.6Z" fill="#c81212"/>
<path d="M342.5 1233.6 h4" stroke="#ffb0b0" stroke-width="1" opacity=".6"/>
<!-- ===== bottom nav buttons ===== -->
<g fill="#8686a6">
 <path d="M16.8 1319 h2 v13 h-2z M27 1319 v13 l-7.2 -6.5z"/>
 <path d="M51 1319 v13 l-7.4 -6.5z"/>
 <path d="M65.4 1319 v13 l7.4 -6.5z"/>
 <path d="M96 1319 h2 v13 h-2z M88 1319 v13 l7.2 -6.5z"/>
</g>
<path d="M34.5 1314 V1337 M58.5 1314 V1337 M82.5 1314 V1337" stroke="#8a8aa8" stroke-width="1" fill="none"/>
<path d="M35.5 1315 V1337 M59.5 1315 V1337 M83.5 1315 V1337 M11.5 1315 V1337" stroke="#aeaec8" stroke-width="1" fill="none"/>
</svg>
<span class="t" style="left:16.3px;top:17.6px;font-size:17px;font-weight:700;letter-spacing:0.41px;color:#2a2a2a">Features</span>
<span class="t" style="left:107.4px;top:17.6px;font-size:17px;letter-spacing:0.16px;color:#2a2a2a">Sketch</span>
<span class="t" style="left:179.2px;top:17.6px;font-size:17px;color:#2a2a2a">Surfaces</span>
<span class="t" style="left:265.8px;top:17.6px;font-size:17px;letter-spacing:0.74px;color:#2a2a2a">Weldments</span>
<span class="t" style="left:376.6px;top:17.6px;font-size:17px;letter-spacing:1.00px;color:#2a2a2a">Markup</span>
<span class="t" style="left:458.4px;top:17.6px;font-size:17px;color:#2a2a2a">Evaluate</span>
<span class="t" style="left:545.7px;top:17.6px;font-size:17px;letter-spacing:0.47px;color:#2a2a2a">MBD Dimensions</span>
<span class="t" style="left:704.6px;top:17.6px;font-size:17px;letter-spacing:0.24px;color:#2a2a2a">SOLIDWORKS Add-Ins</span>
<span class="t" style="left:53.3px;top:130.0px;font-size:17.3px;font-weight:700;letter-spacing:0.33px;color:#1a1a1a">Thicken1</span>
<span class="t" style="left:16.4px;top:213.8px;font-size:15px;font-weight:700;letter-spacing:0.52px;color:#3a3a3a">Thicken Parameters</span>
<span class="t" style="left:84.6px;top:244.8px;font-size:15px;letter-spacing:0.29px;color:#1a1a1a">Surface-Trim1</span>
<span class="t" style="left:64.1px;top:286.8px;font-size:15px;letter-spacing:-0.14px;color:#1a1a1a">Thickness:</span>
<span class="t" style="left:68.5px;top:432.8px;font-size:15px;letter-spacing:0.59px;color:#1a1a1a">0.25in</span>
<span class="t" style="left:86.1px;top:476.0px;font-size:15px;letter-spacing:0.48px;color:#1a1a1a">Merge result</span>
<span class="t" style="left:348.0px;top:58.0px;font-size:17px;letter-spacing:-0.10px;color:#1a1a1a">Example 1 Ro...</span>
<span class="t" style="left:124.7px;top:1317.0px;font-size:18px;font-weight:700;letter-spacing:1.54px;color:#111">Model</span>
<span class="t" style="left:210.5px;top:1317.0px;font-size:18px;letter-spacing:0.63px;color:#1a1a1a">Motion Study 1</span>
<span class="t" style="left:39.0px;top:446.6px;font-size:10.8px;letter-spacing:-1.62px;color:#222">T1</span>
<span class="t" style="left:335.8px;top:1172.6px;font-size:11.5px;color:#1f7a1f">Y</span>
<span class="t" style="left:299.3px;top:1225.9px;font-size:11.5px;color:#3535c8">Z</span>
<span class="t" style="left:373.1px;top:1225.9px;font-size:11.5px;color:#e0607a">X</span>
</body>
</html>
